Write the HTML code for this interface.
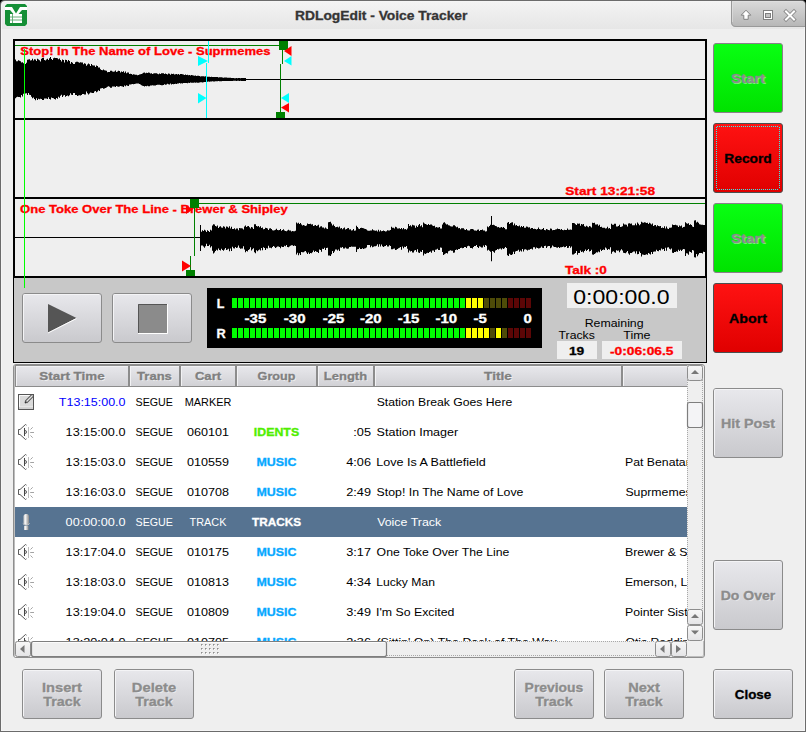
<!DOCTYPE html><html><head><meta charset="utf-8"><style>html,body{margin:0;padding:0;width:806px;height:732px;overflow:hidden;background:#efefef}svg{display:block}text{font-family:"Liberation Sans",sans-serif}</style></head><body>
<svg width="806" height="732" viewBox="0 0 806 732">
<defs>
<linearGradient id="gTitle" x1="0" y1="0" x2="0" y2="1"><stop offset="0" stop-color="#f3f3f3"/><stop offset="1" stop-color="#e6e6e6"/></linearGradient>
<linearGradient id="gTab" x1="0" y1="0" x2="0" y2="1"><stop offset="0" stop-color="#dadada"/><stop offset="1" stop-color="#b6b6b6"/></linearGradient>
<linearGradient id="gBtn" x1="0" y1="0" x2="0" y2="1"><stop offset="0" stop-color="#e8e8ec"/><stop offset="1" stop-color="#c9c9cd"/></linearGradient>
<linearGradient id="gHdr" x1="0" y1="0" x2="0" y2="1"><stop offset="0" stop-color="#e9e9ed"/><stop offset="1" stop-color="#d0d0d4"/></linearGradient>
<linearGradient id="gGreen" x1="0" y1="0" x2="0" y2="1"><stop offset="0" stop-color="#08ff12"/><stop offset="1" stop-color="#00e200"/></linearGradient>
<linearGradient id="gRed" x1="0" y1="0" x2="0" y2="1"><stop offset="0" stop-color="#ff1212"/><stop offset="1" stop-color="#e00000"/></linearGradient>
<linearGradient id="gMic" x1="0" y1="0" x2="1" y2="0"><stop offset="0" stop-color="#c8c8c8"/><stop offset="0.35" stop-color="#f4f4f4"/><stop offset="1" stop-color="#8a8a8a"/></linearGradient>
<linearGradient id="gSb" x1="0" y1="0" x2="0" y2="1"><stop offset="0" stop-color="#f7f7f7"/><stop offset="1" stop-color="#e4e4e6"/></linearGradient>
<clipPath id="clipTbl"><rect x="15" y="365" width="672" height="276"/></clipPath>
<clipPath id="clipBody"><rect x="15" y="387" width="672" height="254"/></clipPath>
</defs>
<rect x="0" y="0" width="806" height="732" fill="#000"/>
<path d="M0,732 L0,5 Q0,0 5,0 L801,0 Q806,0 806,5 L806,732 Z" fill="#6b6b6b"/>
<path d="M1,731 L1,5 Q1,1 5,1 L801,1 Q805,1 805,5 L805,731 Z" fill="#f5f5f5"/>
<rect x="2" y="2" width="802" height="27" fill="url(#gTitle)"/>
<rect x="2" y="29" width="802" height="701" fill="#efefef"/>
<path d="M731,1 L801,1 Q805,1 805,5 L805,27 L736,27 Q731,27 731,22 Z" fill="url(#gTab)"/>
<path d="M731.5,1 L731.5,22 Q731.5,26.5 736,26.5 L805,26.5" fill="none" stroke="#999" stroke-width="1"/>
<path d="M732.5,1.5 L732.5,22 M733,1.5 L801,1.5" fill="none" stroke="#e2e2e2" stroke-width="1" opacity="0.6"/>
<path d="M746,10.2 L750.8,15.2 L748.2,15.2 L748.2,19.3 L743.8,19.3 L743.8,15.2 L741.2,15.2 Z" fill="#fff" stroke="#808080" stroke-width="1" stroke-linejoin="round"/>
<rect x="763.5" y="10.5" width="9" height="9" fill="#fff" stroke="#808080" stroke-width="1"/>
<rect x="765.5" y="13.5" width="5" height="4" fill="#c2c2c2" stroke="#808080" stroke-width="1"/>
<path d="M786,11.5 L794,19.5 M794,11.5 L786,19.5" stroke="#8a8a8a" stroke-width="3.8" stroke-linecap="square"/>
<path d="M786,11.5 L794,19.5 M794,11.5 L786,19.5" stroke="#fff" stroke-width="2" stroke-linecap="square"/>
<path d="M7,4 L25,4 L27,6 L27,24 L25,26 L7,26 L5,24 L5,6 Z" fill="#158f36"/>
<path d="M5,7 L12,7 L16,13.5 L20,7 L27,7 L27,10 L22,10 L18.5,14 L13.5,14 L10,10 L5,10 Z" fill="#fff"/>
<rect x="10" y="14" width="12" height="9" fill="#fff"/>
<path d="M10,17 L22,17 M10,20 L22,20 M12.5,14 L12.5,23" stroke="#5aa86e" stroke-width="0.9"/>
<text x="295.09" y="20.00" font-size="12" font-weight="bold" stroke="#353535" stroke-width="0.3" fill="#353535" text-anchor="start" textLength="172.30" lengthAdjust="spacingAndGlyphs">RDLogEdit - Voice Tracker</text>
<rect x="13" y="39" width="694" height="240" fill="#000"/>
<rect x="15" y="41" width="690" height="77" fill="#efefef"/>
<rect x="15" y="120" width="690" height="77" fill="#efefef"/>
<rect x="15" y="199" width="690" height="77" fill="#efefef"/>
<path d="M15,59.6 L15,59.6 L16,59.6 L16,61.3 L17,61.3 L17,61.2 L18,61.2 L18,60.3 L19,60.3 L19,60.7 L20,60.7 L20,61.2 L21,61.2 L21,62.5 L22,62.5 L22,62.2 L23,62.2 L23,63.2 L24,63.2 L24,62.5 L25,62.5 L25,63.9 L26,63.9 L26,62.8 L27,62.8 L27,59.7 L28,59.7 L28,59.6 L29,59.6 L29,59.2 L30,59.2 L30,60.6 L31,60.6 L31,60.2 L32,60.2 L32,58.8 L33,58.8 L33,60.6 L34,60.6 L34,59.2 L35,59.2 L35,59.6 L36,59.6 L36,60.9 L37,60.9 L37,58.7 L38,58.7 L38,59.5 L39,59.5 L39,60.3 L40,60.3 L40,61.4 L41,61.4 L41,58.8 L42,58.8 L42,58.0 L43,58.0 L43,57.7 L44,57.7 L44,59.9 L45,59.9 L45,60.4 L46,60.4 L46,59.4 L47,59.4 L47,58.8 L48,58.8 L48,59.9 L49,59.9 L49,58.2 L50,58.2 L50,57.1 L51,57.1 L51,59.0 L52,59.0 L52,59.9 L53,59.9 L53,58.3 L54,58.3 L54,57.7 L55,57.7 L55,58.1 L56,58.1 L56,58.1 L57,58.1 L57,58.3 L58,58.3 L58,59.2 L59,59.2 L59,58.6 L60,58.6 L60,60.1 L61,60.1 L61,61.4 L62,61.4 L62,59.5 L63,59.5 L63,59.9 L64,59.9 L64,62.6 L65,62.6 L65,59.8 L66,59.8 L66,60.1 L67,60.1 L67,61.5 L68,61.5 L68,60.1 L69,60.1 L69,61.0 L70,61.0 L70,63.7 L71,63.7 L71,61.9 L72,61.9 L72,62.8 L73,62.8 L73,64.0 L74,64.0 L74,64.0 L75,64.0 L75,62.2 L76,62.2 L76,61.7 L77,61.7 L77,61.8 L78,61.8 L78,62.3 L79,62.3 L79,62.8 L80,62.8 L80,62.3 L81,62.3 L81,62.6 L82,62.6 L82,62.6 L83,62.6 L83,64.3 L84,64.3 L84,63.3 L85,63.3 L85,63.8 L86,63.8 L86,65.7 L87,65.7 L87,64.4 L88,64.4 L88,63.6 L89,63.6 L89,64.3 L90,64.3 L90,66.1 L91,66.1 L91,64.0 L92,64.0 L92,65.3 L93,65.3 L93,65.5 L94,65.5 L94,65.6 L95,65.6 L95,66.9 L96,66.9 L96,65.6 L97,65.6 L97,66.0 L98,66.0 L98,67.4 L99,67.4 L99,67.4 L100,67.4 L100,69.3 L101,69.3 L101,69.9 L102,69.9 L102,70.3 L103,70.3 L103,69.5 L104,69.5 L104,70.3 L105,70.3 L105,70.5 L106,70.5 L106,70.7 L107,70.7 L107,72.2 L108,72.2 L108,72.1 L109,72.1 L109,72.1 L110,72.1 L110,70.7 L111,70.7 L111,70.7 L112,70.7 L112,71.4 L113,71.4 L113,71.8 L114,71.8 L114,71.4 L115,71.4 L115,70.5 L116,70.5 L116,72.0 L117,72.0 L117,71.6 L118,71.6 L118,70.8 L119,70.8 L119,71.1 L120,71.1 L120,72.5 L121,72.5 L121,71.4 L122,71.4 L122,72.1 L123,72.1 L123,71.3 L124,71.3 L124,72.7 L125,72.7 L125,71.6 L126,71.6 L126,73.3 L127,73.3 L127,72.5 L128,72.5 L128,72.6 L129,72.6 L129,74.1 L130,74.1 L130,73.7 L131,73.7 L131,74.0 L132,74.0 L132,74.8 L133,74.8 L133,74.3 L134,74.3 L134,74.5 L135,74.5 L135,74.7 L136,74.7 L136,74.8 L137,74.8 L137,75.2 L138,75.2 L138,75.1 L139,75.1 L139,74.5 L140,74.5 L140,74.3 L141,74.3 L141,74.0 L142,74.0 L142,73.5 L143,73.5 L143,72.8 L144,72.8 L144,72.5 L145,72.5 L145,73.3 L146,73.3 L146,72.8 L147,72.8 L147,73.1 L148,73.1 L148,72.6 L149,72.6 L149,72.8 L150,72.8 L150,73.6 L151,73.6 L151,73.3 L152,73.3 L152,73.9 L153,73.9 L153,73.4 L154,73.4 L154,73.3 L155,73.3 L155,73.3 L156,73.3 L156,73.3 L157,73.3 L157,73.7 L158,73.7 L158,74.2 L159,74.2 L159,73.6 L160,73.6 L160,74.0 L161,74.0 L161,73.2 L162,73.2 L162,73.2 L163,73.2 L163,73.2 L164,73.2 L164,74.1 L165,74.1 L165,73.4 L166,73.4 L166,74.0 L167,74.0 L167,74.4 L168,74.4 L168,73.6 L169,73.6 L169,73.8 L170,73.8 L170,74.7 L171,74.7 L171,73.7 L172,73.7 L172,74.1 L173,74.1 L173,73.8 L174,73.8 L174,74.4 L175,74.4 L175,74.2 L176,74.2 L176,73.9 L177,73.9 L177,74.4 L178,74.4 L178,74.0 L179,74.0 L179,74.7 L180,74.7 L180,74.1 L181,74.1 L181,74.1 L182,74.1 L182,74.3 L183,74.3 L183,74.6 L184,74.6 L184,75.1 L185,75.1 L185,74.6 L186,74.6 L186,75.0 L187,75.0 L187,74.7 L188,74.7 L188,75.3 L189,75.3 L189,74.9 L190,74.9 L190,75.4 L191,75.4 L191,75.1 L192,75.1 L192,75.2 L193,75.2 L193,75.5 L194,75.5 L194,75.7 L195,75.7 L195,75.6 L196,75.6 L196,75.9 L197,75.9 L197,75.7 L198,75.7 L198,75.8 L199,75.8 L199,76.0 L200,76.0 L200,76.4 L201,76.4 L201,76.2 L202,76.2 L202,76.2 L203,76.2 L203,76.2 L204,76.2 L204,76.6 L205,76.6 L205,76.3 L206,76.3 L206,76.9 L207,76.9 L207,76.8 L208,76.8 L208,76.7 L209,76.7 L209,76.7 L210,76.7 L210,76.9 L211,76.9 L211,76.8 L212,76.8 L212,77.1 L213,77.1 L213,77.0 L214,77.0 L214,76.9 L215,76.9 L215,77.0 L216,77.0 L216,77.1 L217,77.1 L217,77.1 L218,77.1 L218,77.5 L219,77.5 L219,77.3 L220,77.3 L220,77.3 L221,77.3 L221,77.3 L222,77.3 L222,77.4 L223,77.4 L223,77.8 L224,77.8 L224,77.5 L225,77.5 L225,77.6 L226,77.6 L226,77.6 L227,77.6 L227,77.8 L228,77.8 L228,77.7 L229,77.7 L229,77.8 L230,77.8 L230,77.8 L231,77.8 L231,77.9 L232,77.9 L232,78.0 L233,78.0 L233,78.1 L234,78.1 L234,78.2 L235,78.2 L235,78.2 L236,78.2 L236,78.0 L237,78.0 L237,78.2 L238,78.2 L238,78.1 L239,78.1 L239,77.9 L240,77.9 L240,78.2 L241,78.2 L241,78.1 L242,78.1 L242,77.9 L243,77.9 L243,78.0 L244,78.0 L244,78.1 L245,78.1 L245,78.0 L246,78.0 L246,80.9 L245,80.9 L245,80.9 L244,80.9 L244,80.9 L243,80.9 L243,81.1 L242,81.1 L242,80.9 L241,80.9 L241,80.8 L240,80.8 L240,81.0 L239,81.0 L239,80.8 L238,80.8 L238,80.8 L237,80.8 L237,80.9 L236,80.9 L236,80.8 L235,80.8 L235,80.8 L234,80.8 L234,80.8 L233,80.8 L233,81.0 L232,81.0 L232,81.0 L231,81.0 L231,81.0 L230,81.0 L230,81.0 L229,81.0 L229,81.0 L228,81.0 L228,81.0 L227,81.0 L227,81.1 L226,81.1 L226,81.1 L225,81.1 L225,81.0 L224,81.0 L224,80.9 L223,80.9 L223,81.0 L222,81.0 L222,81.2 L221,81.2 L221,81.2 L220,81.2 L220,81.2 L219,81.2 L219,81.0 L218,81.0 L218,81.2 L217,81.2 L217,81.3 L216,81.3 L216,81.3 L215,81.3 L215,81.5 L214,81.5 L214,81.4 L213,81.4 L213,81.3 L212,81.3 L212,81.5 L211,81.5 L211,81.4 L210,81.4 L210,81.7 L209,81.7 L209,81.6 L208,81.6 L208,81.7 L207,81.7 L207,81.8 L206,81.8 L206,82.1 L205,82.1 L205,81.9 L204,81.9 L204,82.3 L203,82.3 L203,82.4 L202,82.4 L202,82.3 L201,82.3 L201,82.2 L200,82.2 L200,82.5 L199,82.5 L199,82.7 L198,82.7 L198,82.8 L197,82.8 L197,82.6 L196,82.6 L196,82.8 L195,82.8 L195,82.4 L194,82.4 L194,82.8 L193,82.8 L193,82.8 L192,82.8 L192,82.8 L191,82.8 L191,82.6 L190,82.6 L190,82.9 L189,82.9 L189,82.8 L188,82.8 L188,83.3 L187,83.3 L187,82.9 L186,82.9 L186,83.0 L185,83.0 L185,82.9 L184,82.9 L184,83.0 L183,83.0 L183,83.5 L182,83.5 L182,83.3 L181,83.3 L181,83.6 L180,83.6 L180,82.9 L179,82.9 L179,83.5 L178,83.5 L178,83.5 L177,83.5 L177,84.0 L176,84.0 L176,83.7 L175,83.7 L175,83.9 L174,83.9 L174,84.2 L173,84.2 L173,84.1 L172,84.1 L172,84.4 L171,84.4 L171,83.5 L170,83.5 L170,84.4 L169,84.4 L169,84.3 L168,84.3 L168,83.8 L167,83.8 L167,84.6 L166,84.6 L166,84.7 L165,84.7 L165,84.2 L164,84.2 L164,85.0 L163,85.0 L163,85.3 L162,85.3 L162,85.3 L161,85.3 L161,84.9 L160,84.9 L160,84.8 L159,84.8 L159,84.8 L158,84.8 L158,84.8 L157,84.8 L157,85.1 L156,85.1 L156,85.4 L155,85.4 L155,85.4 L154,85.4 L154,85.5 L153,85.5 L153,85.2 L152,85.2 L152,85.5 L151,85.5 L151,85.5 L150,85.5 L150,86.3 L149,86.3 L149,86.2 L148,86.2 L148,85.8 L147,85.8 L147,86.3 L146,86.3 L146,85.9 L145,85.9 L145,86.6 L144,86.6 L144,86.0 L143,86.0 L143,85.7 L142,85.7 L142,85.3 L141,85.3 L141,84.5 L140,84.5 L140,84.0 L139,84.0 L139,83.4 L138,83.4 L138,83.4 L137,83.4 L137,83.5 L136,83.5 L136,83.8 L135,83.8 L135,83.9 L134,83.9 L134,84.3 L133,84.3 L133,84.0 L132,84.0 L132,84.3 L131,84.3 L131,84.5 L130,84.5 L130,84.4 L129,84.4 L129,86.0 L128,86.0 L128,85.8 L127,85.8 L127,85.2 L126,85.2 L126,86.3 L125,86.3 L125,85.5 L124,85.5 L124,87.0 L123,87.0 L123,86.4 L122,86.4 L122,86.2 L121,86.2 L121,85.9 L120,85.9 L120,86.6 L119,86.6 L119,86.8 L118,86.8 L118,86.4 L117,86.4 L117,86.0 L116,86.0 L116,87.1 L115,87.1 L115,86.5 L114,86.5 L114,86.5 L113,86.5 L113,86.5 L112,86.5 L112,87.7 L111,87.7 L111,87.7 L110,87.7 L110,86.7 L109,86.7 L109,86.2 L108,86.2 L108,86.7 L107,86.7 L107,87.6 L106,87.6 L106,88.1 L105,88.1 L105,88.6 L104,88.6 L104,88.8 L103,88.8 L103,88.1 L102,88.1 L102,88.3 L101,88.3 L101,88.6 L100,88.6 L100,90.9 L99,90.9 L99,90.3 L98,90.3 L98,91.4 L97,91.4 L97,92.3 L96,92.3 L96,91.0 L95,91.0 L95,91.5 L94,91.5 L94,93.0 L93,93.0 L93,93.0 L92,93.0 L92,92.7 L91,92.7 L91,92.5 L90,92.5 L90,93.6 L89,93.6 L89,94.4 L88,94.4 L88,93.3 L87,93.3 L87,91.6 L86,91.6 L86,94.4 L85,94.4 L85,94.4 L84,94.4 L84,94.0 L83,94.0 L83,94.1 L82,94.1 L82,95.0 L81,95.0 L81,95.5 L80,95.5 L80,95.3 L79,95.3 L79,95.5 L78,95.5 L78,95.9 L77,95.9 L77,95.0 L76,95.0 L76,95.0 L75,95.0 L75,93.0 L74,93.0 L74,93.0 L73,93.0 L73,95.1 L72,95.1 L72,94.7 L71,94.7 L71,93.3 L70,93.3 L70,95.3 L69,95.3 L69,96.2 L68,96.2 L68,95.5 L67,95.5 L67,96.0 L66,96.0 L66,96.7 L65,96.7 L65,95.0 L64,95.0 L64,95.6 L63,95.6 L63,96.9 L62,96.9 L62,94.8 L61,94.8 L61,95.8 L60,95.8 L60,97.8 L59,97.8 L59,96.7 L58,96.7 L58,98.7 L57,98.7 L57,97.9 L56,97.9 L56,99.4 L55,99.4 L55,99.1 L54,99.1 L54,98.3 L53,98.3 L53,98.1 L52,98.1 L52,97.5 L51,97.5 L51,99.6 L50,99.6 L50,98.9 L49,98.9 L49,97.3 L48,97.3 L48,99.1 L47,99.1 L47,98.5 L46,98.5 L46,98.5 L45,98.5 L45,98.4 L44,98.4 L44,99.9 L43,99.9 L43,100.1 L42,100.1 L42,99.1 L41,99.1 L41,98.7 L40,98.7 L40,99.3 L39,99.3 L39,98.7 L38,98.7 L38,100.0 L37,100.0 L37,98.3 L36,98.3 L36,100.2 L35,100.2 L35,99.0 L34,99.0 L34,97.4 L33,97.4 L33,98.3 L32,98.3 L32,96.7 L31,96.7 L31,94.9 L30,94.9 L30,94.7 L29,94.7 L29,93.1 L28,93.1 L28,95.0 L27,95.0 L27,93.2 L26,93.2 L26,93.6 L25,93.6 L25,94.6 L24,94.6 L24,93.8 L23,93.8 L23,96.5 L22,96.5 L22,95.1 L21,95.1 L21,97.4 L20,97.4 L20,97.0 L19,97.0 L19,97.1 L18,97.1 L18,96.8 L17,96.8 L17,97.3 L16,97.3 L16,98.2 L15,98.2 Z" fill="#000"/>
<rect x="15" y="79" width="690" height="1" fill="#000"/>
<rect x="15" y="45" width="265" height="1" fill="#008000"/>
<path d="M200,225.0 L200,225.0 L201,225.0 L201,231.7 L202,231.7 L202,230.3 L203,230.3 L203,230.9 L204,230.9 L204,229.8 L205,229.8 L205,230.6 L206,230.6 L206,232.1 L207,232.1 L207,230.3 L208,230.3 L208,231.0 L209,231.0 L209,232.0 L210,232.0 L210,229.8 L211,229.8 L211,230.4 L212,230.4 L212,225.4 L213,225.4 L213,224.3 L214,224.3 L214,224.4 L215,224.4 L215,226.0 L216,226.0 L216,226.4 L217,226.4 L217,225.6 L218,225.6 L218,228.1 L219,228.1 L219,226.8 L220,226.8 L220,226.3 L221,226.3 L221,227.4 L222,227.4 L222,227.7 L223,227.7 L223,226.3 L224,226.3 L224,226.8 L225,226.8 L225,228.4 L226,228.4 L226,226.4 L227,226.4 L227,226.7 L228,226.7 L228,227.8 L229,227.8 L229,226.3 L230,226.3 L230,228.6 L231,228.6 L231,226.7 L232,226.7 L232,229.1 L233,229.1 L233,228.9 L234,228.9 L234,228.3 L235,228.3 L235,229.6 L236,229.6 L236,228.4 L237,228.4 L237,228.4 L238,228.4 L238,230.3 L239,230.3 L239,228.1 L240,228.1 L240,228.3 L241,228.3 L241,228.3 L242,228.3 L242,228.6 L243,228.6 L243,229.5 L244,229.5 L244,226.5 L245,226.5 L245,225.5 L246,225.5 L246,226.9 L247,226.9 L247,226.3 L248,226.3 L248,226.0 L249,226.0 L249,227.3 L250,227.3 L250,228.6 L251,228.6 L251,227.0 L252,227.0 L252,227.4 L253,227.4 L253,228.9 L254,228.9 L254,224.3 L255,224.3 L255,224.2 L256,224.2 L256,226.0 L257,226.0 L257,226.5 L258,226.5 L258,226.1 L259,226.1 L259,227.2 L260,227.2 L260,226.2 L261,226.2 L261,228.1 L262,228.1 L262,227.4 L263,227.4 L263,229.3 L264,229.3 L264,228.9 L265,228.9 L265,227.8 L266,227.8 L266,228.1 L267,228.1 L267,228.4 L268,228.4 L268,230.1 L269,230.1 L269,228.6 L270,228.6 L270,228.3 L271,228.3 L271,229.1 L272,229.1 L272,230.2 L273,230.2 L273,230.6 L274,230.6 L274,230.3 L275,230.3 L275,229.7 L276,229.7 L276,228.7 L277,228.7 L277,229.9 L278,229.9 L278,230.2 L279,230.2 L279,230.0 L280,230.0 L280,229.1 L281,229.1 L281,230.8 L282,230.8 L282,230.1 L283,230.1 L283,229.3 L284,229.3 L284,230.6 L285,230.6 L285,231.0 L286,231.0 L286,231.2 L287,231.2 L287,230.6 L288,230.6 L288,229.7 L289,229.7 L289,230.4 L290,230.4 L290,230.5 L291,230.5 L291,231.4 L292,231.4 L292,231.1 L293,231.1 L293,231.3 L294,231.3 L294,231.2 L295,231.2 L295,230.7 L296,230.7 L296,222.6 L297,222.6 L297,223.5 L298,223.5 L298,222.7 L299,222.7 L299,223.9 L300,223.9 L300,223.0 L301,223.0 L301,224.4 L302,224.4 L302,225.4 L303,225.4 L303,225.1 L304,225.1 L304,225.6 L305,225.6 L305,225.9 L306,225.9 L306,225.4 L307,225.4 L307,223.4 L308,223.4 L308,224.1 L309,224.1 L309,223.9 L310,223.9 L310,223.8 L311,223.8 L311,224.6 L312,224.6 L312,224.2 L313,224.2 L313,226.1 L314,226.1 L314,225.5 L315,225.5 L315,225.1 L316,225.1 L316,225.9 L317,225.9 L317,225.6 L318,225.6 L318,224.8 L319,224.8 L319,227.5 L320,227.5 L320,226.4 L321,226.4 L321,226.2 L322,226.2 L322,227.4 L323,227.4 L323,227.4 L324,227.4 L324,228.4 L325,228.4 L325,227.6 L326,227.6 L326,228.6 L327,228.6 L327,229.1 L328,229.1 L328,222.3 L329,222.3 L329,221.9 L330,221.9 L330,221.8 L331,221.8 L331,223.5 L332,223.5 L332,225.5 L333,225.5 L333,224.5 L334,224.5 L334,225.9 L335,225.9 L335,227.2 L336,227.2 L336,227.1 L337,227.1 L337,226.8 L338,226.8 L338,227.4 L339,227.4 L339,226.5 L340,226.5 L340,228.5 L341,228.5 L341,228.1 L342,228.1 L342,229.3 L343,229.3 L343,228.2 L344,228.2 L344,227.5 L345,227.5 L345,229.4 L346,229.4 L346,229.0 L347,229.0 L347,228.2 L348,228.2 L348,228.1 L349,228.1 L349,229.6 L350,229.6 L350,229.2 L351,229.2 L351,230.6 L352,230.6 L352,230.3 L353,230.3 L353,229.0 L354,229.0 L354,230.7 L355,230.7 L355,230.4 L356,230.4 L356,225.8 L357,225.8 L357,226.9 L358,226.9 L358,228.4 L359,228.4 L359,228.9 L360,228.9 L360,228.0 L361,228.0 L361,227.8 L362,227.8 L362,228.1 L363,228.1 L363,228.2 L364,228.2 L364,228.7 L365,228.7 L365,229.0 L366,229.0 L366,229.5 L367,229.5 L367,230.6 L368,230.6 L368,230.8 L369,230.8 L369,230.8 L370,230.8 L370,230.4 L371,230.4 L371,230.5 L372,230.5 L372,229.3 L373,229.3 L373,230.3 L374,230.3 L374,230.6 L375,230.6 L375,230.8 L376,230.8 L376,230.6 L377,230.6 L377,231.5 L378,231.5 L378,229.8 L379,229.8 L379,231.6 L380,231.6 L380,230.2 L381,230.2 L381,231.2 L382,231.2 L382,231.1 L383,231.1 L383,230.5 L384,230.5 L384,230.9 L385,230.9 L385,231.4 L386,231.4 L386,231.3 L387,231.3 L387,230.3 L388,230.3 L388,230.6 L389,230.6 L389,230.6 L390,230.6 L390,230.0 L391,230.0 L391,226.8 L392,226.8 L392,227.7 L393,227.7 L393,227.7 L394,227.7 L394,228.6 L395,228.6 L395,226.8 L396,226.8 L396,227.2 L397,227.2 L397,228.5 L398,228.5 L398,228.5 L399,228.5 L399,228.2 L400,228.2 L400,228.9 L401,228.9 L401,227.9 L402,227.9 L402,229.2 L403,229.2 L403,228.0 L404,228.0 L404,229.3 L405,229.3 L405,229.1 L406,229.1 L406,229.8 L407,229.8 L407,228.6 L408,228.6 L408,224.1 L409,224.1 L409,226.0 L410,226.0 L410,225.3 L411,225.3 L411,226.6 L412,226.6 L412,224.7 L413,224.7 L413,225.3 L414,225.3 L414,225.5 L415,225.5 L415,227.7 L416,227.7 L416,225.8 L417,225.8 L417,227.1 L418,227.1 L418,225.2 L419,225.2 L419,224.0 L420,224.0 L420,226.3 L421,226.3 L421,225.2 L422,225.2 L422,227.3 L423,227.3 L423,222.5 L424,222.5 L424,223.6 L425,223.6 L425,224.0 L426,224.0 L426,224.4 L427,224.4 L427,224.9 L428,224.9 L428,224.1 L429,224.1 L429,224.9 L430,224.9 L430,224.6 L431,224.6 L431,224.6 L432,224.6 L432,225.5 L433,225.5 L433,225.9 L434,225.9 L434,225.7 L435,225.7 L435,227.4 L436,227.4 L436,227.1 L437,227.1 L437,227.6 L438,227.6 L438,227.6 L439,227.6 L439,226.9 L440,226.9 L440,228.6 L441,228.6 L441,228.5 L442,228.5 L442,224.4 L443,224.4 L443,222.7 L444,222.7 L444,222.2 L445,222.2 L445,223.5 L446,223.5 L446,224.6 L447,224.6 L447,224.2 L448,224.2 L448,225.3 L449,225.3 L449,225.4 L450,225.4 L450,226.2 L451,226.2 L451,226.6 L452,226.6 L452,226.4 L453,226.4 L453,225.3 L454,225.3 L454,225.3 L455,225.3 L455,226.2 L456,226.2 L456,227.2 L457,227.2 L457,226.7 L458,226.7 L458,228.3 L459,228.3 L459,228.1 L460,228.1 L460,229.2 L461,229.2 L461,228.3 L462,228.3 L462,228.3 L463,228.3 L463,228.2 L464,228.2 L464,229.4 L465,229.4 L465,230.1 L466,230.1 L466,229.1 L467,229.1 L467,230.3 L468,230.3 L468,230.6 L469,230.6 L469,230.5 L470,230.5 L470,229.2 L471,229.2 L471,228.9 L472,228.9 L472,229.1 L473,229.1 L473,229.5 L474,229.5 L474,230.4 L475,230.4 L475,230.6 L476,230.6 L476,230.7 L477,230.7 L477,229.8 L478,229.8 L478,229.5 L479,229.5 L479,231.0 L480,231.0 L480,230.0 L481,230.0 L481,230.1 L482,230.1 L482,229.4 L483,229.4 L483,230.4 L484,230.4 L484,230.4 L485,230.4 L485,231.6 L486,231.6 L486,231.2 L487,231.2 L487,226.4 L488,226.4 L488,227.2 L489,227.2 L489,225.9 L490,225.9 L490,224.7 L491,224.7 L491,216.0 L492,216.0 L492,224.9 L493,224.9 L493,224.7 L494,224.7 L494,225.3 L495,225.3 L495,226.1 L496,226.1 L496,226.3 L497,226.3 L497,227.3 L498,227.3 L498,226.9 L499,226.9 L499,227.7 L500,227.7 L500,227.6 L501,227.6 L501,226.9 L502,226.9 L502,227.7 L503,227.7 L503,227.1 L504,227.1 L504,228.1 L505,228.1 L505,229.3 L506,229.3 L506,229.2 L507,229.2 L507,222.7 L508,222.7 L508,222.1 L509,222.1 L509,223.9 L510,223.9 L510,223.0 L511,223.0 L511,222.6 L512,222.6 L512,222.3 L513,222.3 L513,225.2 L514,225.2 L514,223.6 L515,223.6 L515,225.6 L516,225.6 L516,225.0 L517,225.0 L517,226.1 L518,226.1 L518,226.2 L519,226.2 L519,225.6 L520,225.6 L520,227.2 L521,227.2 L521,226.0 L522,226.0 L522,227.1 L523,227.1 L523,226.1 L524,226.1 L524,227.8 L525,227.8 L525,227.7 L526,227.7 L526,226.4 L527,226.4 L527,226.8 L528,226.8 L528,227.6 L529,227.6 L529,227.2 L530,227.2 L530,228.7 L531,228.7 L531,228.0 L532,228.0 L532,227.9 L533,227.9 L533,229.0 L534,229.0 L534,228.7 L535,228.7 L535,228.9 L536,228.9 L536,229.5 L537,229.5 L537,229.0 L538,229.0 L538,227.6 L539,227.6 L539,229.1 L540,229.1 L540,229.4 L541,229.4 L541,229.6 L542,229.6 L542,229.0 L543,229.0 L543,228.1 L544,228.1 L544,230.1 L545,230.1 L545,230.2 L546,230.2 L546,228.9 L547,228.9 L547,229.4 L548,229.4 L548,230.0 L549,230.0 L549,230.3 L550,230.3 L550,228.4 L551,228.4 L551,228.8 L552,228.8 L552,230.3 L553,230.3 L553,229.9 L554,229.9 L554,230.1 L555,230.1 L555,229.4 L556,229.4 L556,229.2 L557,229.2 L557,228.4 L558,228.4 L558,229.0 L559,229.0 L559,229.0 L560,229.0 L560,229.8 L561,229.8 L561,229.1 L562,229.1 L562,229.9 L563,229.9 L563,230.2 L564,230.2 L564,229.8 L565,229.8 L565,230.0 L566,230.0 L566,229.9 L567,229.9 L567,228.6 L568,228.6 L568,229.8 L569,229.8 L569,229.7 L570,229.7 L570,229.6 L571,229.6 L571,229.8 L572,229.8 L572,222.9 L573,222.9 L573,222.9 L574,222.9 L574,223.2 L575,223.2 L575,224.3 L576,224.3 L576,225.1 L577,225.1 L577,223.4 L578,223.4 L578,223.7 L579,223.7 L579,223.4 L580,223.4 L580,225.8 L581,225.8 L581,224.1 L582,224.1 L582,224.6 L583,224.6 L583,224.1 L584,224.1 L584,226.3 L585,226.3 L585,226.7 L586,226.7 L586,225.8 L587,225.8 L587,226.6 L588,226.6 L588,227.3 L589,227.3 L589,226.0 L590,226.0 L590,226.6 L591,226.6 L591,227.5 L592,227.5 L592,222.8 L593,222.8 L593,223.1 L594,223.1 L594,222.8 L595,222.8 L595,224.4 L596,224.4 L596,224.6 L597,224.6 L597,224.2 L598,224.2 L598,225.7 L599,225.7 L599,224.8 L600,224.8 L600,227.0 L601,227.0 L601,226.7 L602,226.7 L602,227.7 L603,227.7 L603,227.7 L604,227.7 L604,227.8 L605,227.8 L605,228.5 L606,228.5 L606,228.2 L607,228.2 L607,226.8 L608,226.8 L608,228.4 L609,228.4 L609,228.0 L610,228.0 L610,229.1 L611,229.1 L611,223.7 L612,223.7 L612,224.8 L613,224.8 L613,224.8 L614,224.8 L614,223.8 L615,223.8 L615,223.8 L616,223.8 L616,226.4 L617,226.4 L617,226.4 L618,226.4 L618,225.9 L619,225.9 L619,224.7 L620,224.7 L620,227.0 L621,227.0 L621,226.8 L622,226.8 L622,226.3 L623,226.3 L623,223.4 L624,223.4 L624,224.4 L625,224.4 L625,224.4 L626,224.4 L626,224.7 L627,224.7 L627,226.6 L628,226.6 L628,223.5 L629,223.5 L629,223.3 L630,223.3 L630,223.7 L631,223.7 L631,223.6 L632,223.6 L632,225.3 L633,225.3 L633,225.3 L634,225.3 L634,225.3 L635,225.3 L635,223.4 L636,223.4 L636,225.2 L637,225.2 L637,222.6 L638,222.6 L638,223.7 L639,223.7 L639,225.2 L640,225.2 L640,224.2 L641,224.2 L641,221.7 L642,221.7 L642,222.5 L643,222.5 L643,222.7 L644,222.7 L644,222.2 L645,222.2 L645,222.4 L646,222.4 L646,223.1 L647,223.1 L647,222.7 L648,222.7 L648,224.0 L649,224.0 L649,222.8 L650,222.8 L650,223.4 L651,223.4 L651,224.6 L652,224.6 L652,223.6 L653,223.6 L653,225.9 L654,225.9 L654,225.2 L655,225.2 L655,224.9 L656,224.9 L656,226.4 L657,226.4 L657,225.2 L658,225.2 L658,225.9 L659,225.9 L659,226.2 L660,226.2 L660,226.0 L661,226.0 L661,228.1 L662,228.1 L662,227.4 L663,227.4 L663,228.0 L664,228.0 L664,226.2 L665,226.2 L665,228.6 L666,228.6 L666,226.4 L667,226.4 L667,228.5 L668,228.5 L668,229.0 L669,229.0 L669,227.7 L670,227.7 L670,227.7 L671,227.7 L671,227.6 L672,227.6 L672,224.5 L673,224.5 L673,224.9 L674,224.9 L674,225.1 L675,225.1 L675,224.7 L676,224.7 L676,225.2 L677,225.2 L677,225.5 L678,225.5 L678,226.9 L679,226.9 L679,225.5 L680,225.5 L680,226.3 L681,226.3 L681,225.6 L682,225.6 L682,227.7 L683,227.7 L683,227.0 L684,227.0 L684,226.8 L685,226.8 L685,222.3 L686,222.3 L686,223.3 L687,223.3 L687,223.7 L688,223.7 L688,223.3 L689,223.3 L689,225.0 L690,225.0 L690,224.3 L691,224.3 L691,225.1 L692,225.1 L692,226.5 L693,226.5 L693,227.1 L694,227.1 L694,220.6 L695,220.6 L695,220.3 L696,220.3 L696,222.4 L697,222.4 L697,221.8 L698,221.8 L698,222.7 L699,222.7 L699,224.2 L700,224.2 L700,224.4 L701,224.4 L701,224.7 L702,224.7 L702,224.7 L703,224.7 L703,225.1 L704,225.1 L704,225.1 L705,225.1 L705,251.9 L704,251.9 L704,251.8 L703,251.8 L703,253.4 L702,253.4 L702,252.9 L701,252.9 L701,253.0 L700,253.0 L700,252.9 L699,252.9 L699,254.6 L698,254.6 L698,256.3 L697,256.3 L697,254.1 L696,254.1 L696,257.5 L695,257.5 L695,257.3 L694,257.3 L694,250.4 L693,250.4 L693,250.1 L692,250.1 L692,252.8 L691,252.8 L691,251.9 L690,251.9 L690,251.5 L689,251.5 L689,254.8 L688,254.8 L688,253.4 L687,253.4 L687,253.2 L686,253.2 L686,256.0 L685,256.0 L685,249.2 L684,249.2 L684,249.0 L683,249.0 L683,249.8 L682,249.8 L682,250.9 L681,250.9 L681,249.7 L680,249.7 L680,251.1 L679,251.1 L679,249.7 L678,249.7 L678,251.7 L677,251.7 L677,251.3 L676,251.3 L676,252.0 L675,252.0 L675,251.9 L674,251.9 L674,253.0 L673,253.0 L673,252.8 L672,252.8 L672,248.6 L671,248.6 L671,249.6 L670,249.6 L670,248.8 L669,248.8 L669,247.3 L668,247.3 L668,247.5 L667,247.5 L667,250.8 L666,250.8 L666,247.8 L665,247.8 L665,250.9 L664,250.9 L664,249.0 L663,249.0 L663,249.4 L662,249.4 L662,248.5 L661,248.5 L661,250.4 L660,250.4 L660,250.1 L659,250.1 L659,251.2 L658,251.2 L658,251.0 L657,251.0 L657,249.7 L656,249.7 L656,251.5 L655,251.5 L655,251.6 L654,251.6 L654,251.8 L653,251.8 L653,254.1 L652,254.1 L652,251.9 L651,251.9 L651,254.5 L650,254.5 L650,253.8 L649,253.8 L649,253.1 L648,253.1 L648,254.7 L647,254.7 L647,254.2 L646,254.2 L646,254.8 L645,254.8 L645,254.9 L644,254.9 L644,254.7 L643,254.7 L643,254.6 L642,254.6 L642,256.4 L641,256.4 L641,252.9 L640,252.9 L640,251.6 L639,251.6 L639,254.0 L638,254.0 L638,254.3 L637,254.3 L637,251.2 L636,251.2 L636,253.4 L635,253.4 L635,251.5 L634,251.5 L634,251.4 L633,251.4 L633,252.2 L632,252.2 L632,253.1 L631,253.1 L631,253.0 L630,253.0 L630,254.8 L629,254.8 L629,253.5 L628,253.5 L628,251.1 L627,251.1 L627,252.3 L626,252.3 L626,253.3 L625,253.3 L625,253.1 L624,253.1 L624,252.8 L623,252.8 L623,250.6 L622,250.6 L622,249.3 L621,249.3 L621,250.6 L620,250.6 L620,252.3 L619,252.3 L619,250.4 L618,250.4 L618,250.7 L617,250.7 L617,250.2 L616,250.2 L616,252.8 L615,252.8 L615,252.3 L614,252.3 L614,251.3 L613,251.3 L613,251.7 L612,251.7 L612,253.7 L611,253.7 L611,247.2 L610,247.2 L610,249.6 L609,249.6 L609,249.1 L608,249.1 L608,249.9 L607,249.9 L607,248.4 L606,248.4 L606,247.4 L605,247.4 L605,249.9 L604,249.9 L604,249.5 L603,249.5 L603,250.1 L602,250.1 L602,251.1 L601,251.1 L601,249.4 L600,249.4 L600,252.2 L599,252.2 L599,251.6 L598,251.6 L598,252.4 L597,252.4 L597,252.3 L596,252.3 L596,253.2 L595,253.2 L595,254.1 L594,254.1 L594,254.7 L593,254.7 L593,254.4 L592,254.4 L592,249.7 L591,249.7 L591,251.1 L590,251.1 L590,251.4 L589,251.4 L589,249.1 L588,249.1 L588,250.1 L587,250.1 L587,251.1 L586,251.1 L586,249.6 L585,249.6 L585,251.1 L584,251.1 L584,252.6 L583,252.6 L583,251.6 L582,251.6 L582,252.0 L581,252.0 L581,250.6 L580,250.6 L580,253.0 L579,253.0 L579,253.0 L578,253.0 L578,254.7 L577,254.7 L577,251.1 L576,251.1 L576,253.0 L575,253.0 L575,253.7 L574,253.7 L574,254.6 L573,254.6 L573,254.4 L572,254.4 L572,246.4 L571,246.4 L571,247.7 L570,247.7 L570,246.1 L569,246.1 L569,247.7 L568,247.7 L568,248.1 L567,248.1 L567,245.9 L566,245.9 L566,247.1 L565,247.1 L565,247.2 L564,247.2 L564,246.4 L563,246.4 L563,247.0 L562,247.0 L562,247.3 L561,247.3 L561,247.2 L560,247.2 L560,247.9 L559,247.9 L559,247.0 L558,247.0 L558,247.8 L557,247.8 L557,247.4 L556,247.4 L556,247.1 L555,247.1 L555,246.9 L554,246.9 L554,246.5 L553,246.5 L553,245.6 L552,245.6 L552,247.5 L551,247.5 L551,248.2 L550,248.2 L550,245.9 L549,245.9 L549,246.1 L548,246.1 L548,246.5 L547,246.5 L547,248.1 L546,248.1 L546,245.8 L545,245.8 L545,246.1 L544,246.1 L544,248.1 L543,248.1 L543,247.7 L542,247.7 L542,246.5 L541,246.5 L541,247.8 L540,247.8 L540,248.2 L539,248.2 L539,248.5 L538,248.5 L538,248.1 L537,248.1 L537,247.4 L536,247.4 L536,248.8 L535,248.8 L535,247.3 L534,247.3 L534,247.3 L533,247.3 L533,249.4 L532,249.4 L532,248.7 L531,248.7 L531,248.9 L530,248.9 L530,249.7 L529,249.7 L529,249.8 L528,249.8 L528,250.5 L527,250.5 L527,249.7 L526,249.7 L526,249.2 L525,249.2 L525,249.6 L524,249.6 L524,251.5 L523,251.5 L523,248.9 L522,248.9 L522,251.4 L521,251.4 L521,250.5 L520,250.5 L520,251.8 L519,251.8 L519,249.8 L518,249.8 L518,250.8 L517,250.8 L517,251.1 L516,251.1 L516,251.5 L515,251.5 L515,254.1 L514,254.1 L514,251.7 L513,251.7 L513,254.3 L512,254.3 L512,254.9 L511,254.9 L511,254.7 L510,254.7 L510,253.7 L509,253.7 L509,256.0 L508,256.0 L508,255.3 L507,255.3 L507,247.9 L506,247.9 L506,247.0 L505,247.0 L505,248.3 L504,248.3 L504,248.9 L503,248.9 L503,248.3 L502,248.3 L502,249.4 L501,249.4 L501,248.5 L500,248.5 L500,248.8 L499,248.8 L499,249.4 L498,249.4 L498,248.9 L497,248.9 L497,249.9 L496,249.9 L496,250.5 L495,250.5 L495,252.7 L494,252.7 L494,251.8 L493,251.8 L493,251.1 L492,251.1 L492,261.2 L491,261.2 L491,251.8 L490,251.8 L490,250.7 L489,250.7 L489,249.8 L488,249.8 L488,250.5 L487,250.5 L487,245.8 L486,245.8 L486,245.0 L485,245.0 L485,247.0 L484,247.0 L484,245.5 L483,245.5 L483,247.6 L482,247.6 L482,247.4 L481,247.4 L481,246.7 L480,246.7 L480,246.3 L479,246.3 L479,248.0 L478,248.0 L478,247.1 L477,247.1 L477,245.0 L476,245.0 L476,246.1 L475,246.1 L475,246.1 L474,246.1 L474,247.1 L473,247.1 L473,248.4 L472,248.4 L472,248.0 L471,248.0 L471,247.9 L470,247.9 L470,246.3 L469,246.3 L469,245.8 L468,245.8 L468,246.2 L467,246.2 L467,247.9 L466,247.9 L466,247.0 L465,247.0 L465,247.1 L464,247.1 L464,248.0 L463,248.0 L463,248.2 L462,248.2 L462,247.7 L461,247.7 L461,248.0 L460,248.0 L460,248.9 L459,248.9 L459,249.0 L458,249.0 L458,250.0 L457,250.0 L457,249.5 L456,249.5 L456,250.1 L455,250.1 L455,252.6 L454,252.6 L454,252.7 L453,252.7 L453,250.7 L452,250.7 L452,250.8 L451,250.8 L451,250.3 L450,250.3 L450,250.8 L449,250.8 L449,251.3 L448,251.3 L448,253.5 L447,253.5 L447,253.0 L446,253.0 L446,253.4 L445,253.4 L445,254.3 L444,254.3 L444,255.0 L443,255.0 L443,251.9 L442,251.9 L442,247.7 L441,247.7 L441,247.4 L440,247.4 L440,249.9 L439,249.9 L439,250.1 L438,250.1 L438,248.7 L437,248.7 L437,249.5 L436,249.5 L436,249.7 L435,249.7 L435,252.0 L434,252.0 L434,250.6 L433,250.6 L433,250.6 L432,250.6 L432,252.8 L431,252.8 L431,251.6 L430,251.6 L430,251.9 L429,251.9 L429,253.0 L428,253.0 L428,252.8 L427,252.8 L427,253.3 L426,253.3 L426,254.0 L425,254.0 L425,253.6 L424,253.6 L424,255.4 L423,255.4 L423,250.1 L422,250.1 L422,252.1 L421,252.1 L421,251.4 L420,251.4 L420,253.0 L419,253.0 L419,252.4 L418,252.4 L418,249.2 L417,249.2 L417,251.8 L416,251.8 L416,250.1 L415,250.1 L415,250.6 L414,250.6 L414,252.6 L413,252.6 L413,252.4 L412,252.4 L412,250.9 L411,250.9 L411,251.6 L410,251.6 L410,250.4 L409,250.4 L409,252.6 L408,252.6 L408,248.7 L407,248.7 L407,246.1 L406,246.1 L406,247.1 L405,247.1 L405,246.7 L404,246.7 L404,248.3 L403,248.3 L403,246.5 L402,246.5 L402,249.8 L401,249.8 L401,246.9 L400,246.9 L400,247.7 L399,247.7 L399,248.3 L398,248.3 L398,248.9 L397,248.9 L397,249.7 L396,249.7 L396,249.9 L395,249.9 L395,248.5 L394,248.5 L394,248.7 L393,248.7 L393,249.2 L392,249.2 L392,249.2 L391,249.2 L391,246.0 L390,246.0 L390,245.3 L389,245.3 L389,246.6 L388,246.6 L388,246.4 L387,246.4 L387,244.9 L386,244.9 L386,246.1 L385,246.1 L385,246.3 L384,246.3 L384,246.9 L383,246.9 L383,246.3 L382,246.3 L382,244.6 L381,244.6 L381,246.4 L380,246.4 L380,244.3 L379,244.3 L379,246.8 L378,246.8 L378,244.2 L377,244.2 L377,245.7 L376,245.7 L376,246.3 L375,246.3 L375,246.3 L374,246.3 L374,246.8 L373,246.8 L373,247.3 L372,247.3 L372,245.7 L371,245.7 L371,247.2 L370,247.2 L370,245.0 L369,245.0 L369,244.9 L368,244.9 L368,245.1 L367,245.1 L367,247.5 L366,247.5 L366,248.3 L365,248.3 L365,248.4 L364,248.4 L364,248.9 L363,248.9 L363,248.2 L362,248.2 L362,249.1 L361,249.1 L361,249.1 L360,249.1 L360,247.7 L359,247.7 L359,249.1 L358,249.1 L358,249.2 L357,249.2 L357,252.0 L356,252.0 L356,246.7 L355,246.7 L355,246.7 L354,246.7 L354,246.8 L353,246.8 L353,246.8 L352,246.8 L352,246.5 L351,246.5 L351,247.1 L350,247.1 L350,247.1 L349,247.1 L349,248.5 L348,248.5 L348,248.7 L347,248.7 L347,248.6 L346,248.6 L346,247.5 L345,247.5 L345,248.5 L344,248.5 L344,248.6 L343,248.6 L343,246.9 L342,246.9 L342,247.8 L341,247.8 L341,247.5 L340,247.5 L340,250.9 L339,250.9 L339,249.5 L338,249.5 L338,250.4 L337,250.4 L337,249.4 L336,249.4 L336,249.4 L335,249.4 L335,251.6 L334,251.6 L334,253.1 L333,253.1 L333,251.1 L332,251.1 L332,254.2 L331,254.2 L331,256.1 L330,256.1 L330,255.5 L329,255.5 L329,255.4 L328,255.4 L328,247.7 L327,247.7 L327,247.9 L326,247.9 L326,250.0 L325,250.0 L325,247.8 L324,247.8 L324,249.1 L323,249.1 L323,248.8 L322,248.8 L322,251.8 L321,251.8 L321,249.9 L320,249.9 L320,249.5 L319,249.5 L319,252.9 L318,252.9 L318,251.9 L317,251.9 L317,251.7 L316,251.7 L316,250.9 L315,250.9 L315,251.9 L314,251.9 L314,250.6 L313,250.6 L313,252.2 L312,252.2 L312,253.3 L311,253.3 L311,253.0 L310,253.0 L310,254.0 L309,254.0 L309,252.5 L308,252.5 L308,254.0 L307,254.0 L307,252.4 L306,252.4 L306,251.1 L305,251.1 L305,251.4 L304,251.4 L304,252.3 L303,252.3 L303,252.2 L302,252.2 L302,252.1 L301,252.1 L301,255.1 L300,255.1 L300,253.2 L299,253.2 L299,255.3 L298,255.3 L298,252.8 L297,252.8 L297,254.4 L296,254.4 L296,246.1 L295,246.1 L295,245.4 L294,245.4 L294,245.9 L293,245.9 L293,245.2 L292,245.2 L292,245.2 L291,245.2 L291,245.7 L290,245.7 L290,246.6 L289,246.6 L289,247.3 L288,247.3 L288,247.0 L287,247.0 L287,245.0 L286,245.0 L286,246.3 L285,246.3 L285,245.8 L284,245.8 L284,247.1 L283,247.1 L283,247.1 L282,247.1 L282,246.6 L281,246.6 L281,248.2 L280,248.2 L280,246.9 L279,246.9 L279,246.6 L278,246.6 L278,246.6 L277,246.6 L277,247.2 L276,247.2 L276,248.0 L275,248.0 L275,246.8 L274,246.8 L274,245.9 L273,245.9 L273,247.1 L272,247.1 L272,248.2 L271,248.2 L271,247.7 L270,247.7 L270,247.7 L269,247.7 L269,245.8 L268,245.8 L268,248.5 L267,248.5 L267,248.2 L266,248.2 L266,250.0 L265,250.0 L265,247.9 L264,247.9 L264,247.3 L263,247.3 L263,250.3 L262,250.3 L262,247.9 L261,247.9 L261,250.5 L260,250.5 L260,249.5 L259,249.5 L259,250.3 L258,250.3 L258,251.2 L257,251.2 L257,250.2 L256,250.2 L256,253.3 L255,253.3 L255,252.2 L254,252.2 L254,248.3 L253,248.3 L253,249.3 L252,249.3 L252,250.4 L251,250.4 L251,247.3 L250,247.3 L250,249.3 L249,249.3 L249,250.0 L248,250.0 L248,251.5 L247,251.5 L247,250.9 L246,250.9 L246,252.3 L245,252.3 L245,249.6 L244,249.6 L244,246.3 L243,246.3 L243,248.6 L242,248.6 L242,248.6 L241,248.6 L241,248.8 L240,248.8 L240,247.8 L239,247.8 L239,245.6 L238,245.6 L238,247.5 L237,247.5 L237,247.9 L236,247.9 L236,247.1 L235,247.1 L235,248.5 L234,248.5 L234,248.2 L233,248.2 L233,246.8 L232,246.8 L232,251.0 L231,251.0 L231,248.4 L230,248.4 L230,251.3 L229,251.3 L229,248.8 L228,248.8 L228,249.5 L227,249.5 L227,250.0 L226,250.0 L226,247.9 L225,247.9 L225,249.5 L224,249.5 L224,250.8 L223,250.8 L223,249.9 L222,249.9 L222,248.8 L221,248.8 L221,250.5 L220,250.5 L220,250.0 L219,250.0 L219,248.6 L218,248.6 L218,250.6 L217,250.6 L217,249.7 L216,249.7 L216,251.1 L215,251.1 L215,252.6 L214,252.6 L214,253.5 L213,253.5 L213,250.8 L212,250.8 L212,246.3 L211,246.3 L211,247.5 L210,247.5 L210,244.8 L209,244.8 L209,245.9 L208,245.9 L208,245.9 L207,245.9 L207,243.8 L206,243.8 L206,246.2 L205,246.2 L205,247.7 L204,247.7 L204,246.4 L203,246.4 L203,245.5 L202,245.5 L202,245.4 L201,245.4 L201,251.0 L200,251.0 Z" fill="#000"/>
<rect x="15" y="237" width="186" height="1" fill="#000"/>
<rect x="199" y="203" width="506" height="1" fill="#008000"/>
<text x="20.22" y="55.00" font-size="11" font-weight="bold" stroke="#ff0000" stroke-width="0.3" fill="#ff0000" text-anchor="start" textLength="250.26" lengthAdjust="spacingAndGlyphs">Stop! In The Name of Love - Suprmemes</text>
<text x="20.07" y="213.30" font-size="11" font-weight="bold" stroke="#ff0000" stroke-width="0.3" fill="#ff0000" text-anchor="start" textLength="267.66" lengthAdjust="spacingAndGlyphs">One Toke Over The Line - Brewer &amp; Shipley</text>
<text x="565.21" y="195.00" font-size="11" font-weight="bold" stroke="#ff0000" stroke-width="0.3" fill="#ff0000" text-anchor="start" textLength="89.84" lengthAdjust="spacingAndGlyphs">Start 13:21:58</text>
<text x="564.95" y="274.00" font-size="11" font-weight="bold" stroke="#ff0000" stroke-width="0.3" fill="#ff0000" text-anchor="start" textLength="41.89" lengthAdjust="spacingAndGlyphs">Talk :0</text>
<rect x="208" y="41" width="1" height="22" fill="#00ffff"/>
<rect x="206" y="63" width="1" height="55" fill="#00ffff"/>
<path d="M198,56 L208,61 L198,66 Z" fill="#00ffff"/>
<path d="M198,93 L206.5,98 L198,103.5 Z" fill="#00ffff"/>
<rect x="279" y="41" width="9" height="9" fill="#008000"/>
<rect x="282" y="50" width="1" height="14" fill="#008000"/>
<rect x="280" y="64" width="1" height="48" fill="#008000"/>
<path d="M291.5,46 L284,51 L291.5,56 Z" fill="#ff0000"/>
<path d="M291.5,56 L284,61 L291.5,65.5 Z" fill="#00ffff"/>
<path d="M289,93 L281,98 L289,103 Z" fill="#00ffff"/>
<path d="M289,103 L281,107.5 L289,112.5 Z" fill="#ff0000"/>
<rect x="276" y="112" width="9" height="6" fill="#008000"/>
<rect x="190" y="199" width="9" height="9" fill="#008000"/>
<rect x="194" y="208" width="1" height="48" fill="#008000"/>
<rect x="190" y="256" width="1" height="14" fill="#008000"/>
<path d="M186,205 L193,209.5 L186,214 Z" fill="#ff0000"/>
<path d="M182,260.5 L191,266 L182,271.5 Z" fill="#ff0000"/>
<rect x="186" y="270" width="9" height="6" fill="#008000"/>
<rect x="13" y="278" width="694" height="85" fill="#000"/>
<rect x="14" y="278" width="692" height="84" fill="#c8c8c8"/>
<rect x="24" y="49" width="1" height="239" fill="#00ff00"/>
<rect x="22.5" y="293.5" width="79" height="49" rx="2.5" ry="2.5" fill="url(#gBtn)" stroke="#8b8b8b" stroke-width="1"/>
<path d="M23.5,340 L23.5,295.5 Q23.5,294.5 24.5,294.5 L99,294.5" fill="none" stroke="#f4f4f6" stroke-width="1"/>
<path d="M48,304 L76.5,318 L48,332.5 Z" fill="#555"/>
<path d="M76.5,318.5 L48,333" stroke="#fff" stroke-width="1"/>
<rect x="112.5" y="293.5" width="79" height="49" rx="2.5" ry="2.5" fill="url(#gBtn)" stroke="#8b8b8b" stroke-width="1"/>
<path d="M113.5,340 L113.5,295.5 Q113.5,294.5 114.5,294.5 L189,294.5" fill="none" stroke="#f4f4f6" stroke-width="1"/>
<rect x="138" y="304" width="29" height="29" fill="#8b8b8b"/>
<path d="M138.5,333 L138.5,304.5 L167,304.5" fill="none" stroke="#555" stroke-width="1"/>
<path d="M138,333.5 L167.5,333.5 L167.5,304" fill="none" stroke="#fff" stroke-width="1"/>
<rect x="207" y="288" width="335" height="60" fill="#000"/>
<text x="216.66" y="308.00" font-size="12" font-weight="bold" stroke="#fff" stroke-width="0.3" fill="#fff" text-anchor="start" textLength="7.65" lengthAdjust="spacingAndGlyphs">L</text>
<text x="216.64" y="338.00" font-size="12" font-weight="bold" stroke="#fff" stroke-width="0.3" fill="#fff" text-anchor="start" textLength="9.24" lengthAdjust="spacingAndGlyphs">R</text>
<rect x="232" y="298" width="5" height="10" fill="#00ff00"/>
<rect x="238" y="298" width="5" height="10" fill="#00ff00"/>
<rect x="244" y="298" width="5" height="10" fill="#00ff00"/>
<rect x="250" y="298" width="5" height="10" fill="#00ff00"/>
<rect x="256" y="298" width="5" height="10" fill="#00ff00"/>
<rect x="262" y="298" width="5" height="10" fill="#00ff00"/>
<rect x="268" y="298" width="5" height="10" fill="#00ff00"/>
<rect x="274" y="298" width="5" height="10" fill="#00ff00"/>
<rect x="280" y="298" width="5" height="10" fill="#00ff00"/>
<rect x="286" y="298" width="5" height="10" fill="#00ff00"/>
<rect x="292" y="298" width="5" height="10" fill="#00ff00"/>
<rect x="298" y="298" width="5" height="10" fill="#00ff00"/>
<rect x="304" y="298" width="5" height="10" fill="#00ff00"/>
<rect x="310" y="298" width="5" height="10" fill="#00ff00"/>
<rect x="316" y="298" width="5" height="10" fill="#00ff00"/>
<rect x="322" y="298" width="5" height="10" fill="#00ff00"/>
<rect x="328" y="298" width="5" height="10" fill="#00ff00"/>
<rect x="334" y="298" width="5" height="10" fill="#00ff00"/>
<rect x="340" y="298" width="5" height="10" fill="#00ff00"/>
<rect x="346" y="298" width="5" height="10" fill="#00ff00"/>
<rect x="352" y="298" width="5" height="10" fill="#00ff00"/>
<rect x="358" y="298" width="5" height="10" fill="#00ff00"/>
<rect x="364" y="298" width="5" height="10" fill="#00ff00"/>
<rect x="370" y="298" width="5" height="10" fill="#00ff00"/>
<rect x="376" y="298" width="5" height="10" fill="#00ff00"/>
<rect x="382" y="298" width="5" height="10" fill="#00ff00"/>
<rect x="388" y="298" width="5" height="10" fill="#00ff00"/>
<rect x="394" y="298" width="5" height="10" fill="#00ff00"/>
<rect x="400" y="298" width="5" height="10" fill="#00ff00"/>
<rect x="406" y="298" width="5" height="10" fill="#00ff00"/>
<rect x="412" y="298" width="5" height="10" fill="#00ff00"/>
<rect x="418" y="298" width="5" height="10" fill="#00ff00"/>
<rect x="424" y="298" width="5" height="10" fill="#00ff00"/>
<rect x="430" y="298" width="5" height="10" fill="#00ff00"/>
<rect x="436" y="298" width="5" height="10" fill="#00ff00"/>
<rect x="442" y="298" width="5" height="10" fill="#00ff00"/>
<rect x="448" y="298" width="5" height="10" fill="#00ff00"/>
<rect x="454" y="298" width="5" height="10" fill="#00ff00"/>
<rect x="460" y="298" width="5" height="10" fill="#00ff00"/>
<rect x="466" y="298" width="5" height="10" fill="#ffff00"/>
<rect x="472" y="298" width="5" height="10" fill="#ffff00"/>
<rect x="478" y="298" width="5" height="10" fill="#ffff00"/>
<rect x="484" y="298" width="5" height="10" fill="#4e4b08"/>
<rect x="490" y="298" width="5" height="10" fill="#4e4b08"/>
<rect x="496" y="298" width="5" height="10" fill="#4e4b08"/>
<rect x="502" y="298" width="5" height="10" fill="#4e4b08"/>
<rect x="508" y="298" width="5" height="10" fill="#5c0606"/>
<rect x="514" y="298" width="5" height="10" fill="#5c0606"/>
<rect x="520" y="298" width="5" height="10" fill="#5c0606"/>
<rect x="526" y="298" width="5" height="10" fill="#5c0606"/>
<rect x="232" y="328" width="5" height="10" fill="#00ff00"/>
<rect x="238" y="328" width="5" height="10" fill="#00ff00"/>
<rect x="244" y="328" width="5" height="10" fill="#00ff00"/>
<rect x="250" y="328" width="5" height="10" fill="#00ff00"/>
<rect x="256" y="328" width="5" height="10" fill="#00ff00"/>
<rect x="262" y="328" width="5" height="10" fill="#00ff00"/>
<rect x="268" y="328" width="5" height="10" fill="#00ff00"/>
<rect x="274" y="328" width="5" height="10" fill="#00ff00"/>
<rect x="280" y="328" width="5" height="10" fill="#00ff00"/>
<rect x="286" y="328" width="5" height="10" fill="#00ff00"/>
<rect x="292" y="328" width="5" height="10" fill="#00ff00"/>
<rect x="298" y="328" width="5" height="10" fill="#00ff00"/>
<rect x="304" y="328" width="5" height="10" fill="#00ff00"/>
<rect x="310" y="328" width="5" height="10" fill="#00ff00"/>
<rect x="316" y="328" width="5" height="10" fill="#00ff00"/>
<rect x="322" y="328" width="5" height="10" fill="#00ff00"/>
<rect x="328" y="328" width="5" height="10" fill="#00ff00"/>
<rect x="334" y="328" width="5" height="10" fill="#00ff00"/>
<rect x="340" y="328" width="5" height="10" fill="#00ff00"/>
<rect x="346" y="328" width="5" height="10" fill="#00ff00"/>
<rect x="352" y="328" width="5" height="10" fill="#00ff00"/>
<rect x="358" y="328" width="5" height="10" fill="#00ff00"/>
<rect x="364" y="328" width="5" height="10" fill="#00ff00"/>
<rect x="370" y="328" width="5" height="10" fill="#00ff00"/>
<rect x="376" y="328" width="5" height="10" fill="#00ff00"/>
<rect x="382" y="328" width="5" height="10" fill="#00ff00"/>
<rect x="388" y="328" width="5" height="10" fill="#00ff00"/>
<rect x="394" y="328" width="5" height="10" fill="#00ff00"/>
<rect x="400" y="328" width="5" height="10" fill="#00ff00"/>
<rect x="406" y="328" width="5" height="10" fill="#00ff00"/>
<rect x="412" y="328" width="5" height="10" fill="#00ff00"/>
<rect x="418" y="328" width="5" height="10" fill="#00ff00"/>
<rect x="424" y="328" width="5" height="10" fill="#00ff00"/>
<rect x="430" y="328" width="5" height="10" fill="#00ff00"/>
<rect x="436" y="328" width="5" height="10" fill="#00ff00"/>
<rect x="442" y="328" width="5" height="10" fill="#00ff00"/>
<rect x="448" y="328" width="5" height="10" fill="#00ff00"/>
<rect x="454" y="328" width="5" height="10" fill="#00ff00"/>
<rect x="460" y="328" width="5" height="10" fill="#00ff00"/>
<rect x="466" y="328" width="5" height="10" fill="#ffff00"/>
<rect x="472" y="328" width="5" height="10" fill="#ffff00"/>
<rect x="478" y="328" width="5" height="10" fill="#ffff00"/>
<rect x="484" y="328" width="5" height="10" fill="#ffff00"/>
<rect x="490" y="328" width="5" height="10" fill="#4e4b08"/>
<rect x="496" y="328" width="5" height="10" fill="#ffff00"/>
<rect x="502" y="328" width="5" height="10" fill="#4e4b08"/>
<rect x="508" y="328" width="5" height="10" fill="#5c0606"/>
<rect x="514" y="328" width="5" height="10" fill="#5c0606"/>
<rect x="520" y="328" width="5" height="10" fill="#5c0606"/>
<rect x="526" y="328" width="5" height="10" fill="#5c0606"/>
<text x="244.61" y="323.00" font-size="12" font-weight="bold" stroke="#fff" stroke-width="0.3" fill="#fff" text-anchor="start" textLength="21.68" lengthAdjust="spacingAndGlyphs">-35</text>
<text x="283.81" y="323.00" font-size="12" font-weight="bold" stroke="#fff" stroke-width="0.3" fill="#fff" text-anchor="start" textLength="21.68" lengthAdjust="spacingAndGlyphs">-30</text>
<text x="322.71" y="323.00" font-size="12" font-weight="bold" stroke="#fff" stroke-width="0.3" fill="#fff" text-anchor="start" textLength="21.68" lengthAdjust="spacingAndGlyphs">-25</text>
<text x="359.91" y="323.00" font-size="12" font-weight="bold" stroke="#fff" stroke-width="0.3" fill="#fff" text-anchor="start" textLength="21.68" lengthAdjust="spacingAndGlyphs">-20</text>
<text x="397.71" y="323.00" font-size="12" font-weight="bold" stroke="#fff" stroke-width="0.3" fill="#fff" text-anchor="start" textLength="21.68" lengthAdjust="spacingAndGlyphs">-15</text>
<text x="435.41" y="323.00" font-size="12" font-weight="bold" stroke="#fff" stroke-width="0.3" fill="#fff" text-anchor="start" textLength="21.68" lengthAdjust="spacingAndGlyphs">-10</text>
<text x="473.41" y="323.00" font-size="12" font-weight="bold" stroke="#fff" stroke-width="0.3" fill="#fff" text-anchor="start" textLength="13.33" lengthAdjust="spacingAndGlyphs">-5</text>
<text x="523.41" y="323.00" font-size="12" font-weight="bold" stroke="#fff" stroke-width="0.3" fill="#fff" text-anchor="start" textLength="8.35" lengthAdjust="spacingAndGlyphs">0</text>
<rect x="567" y="283" width="110" height="25" fill="#efefef"/>
<text x="573.30" y="303.50" font-size="20" fill="#000" text-anchor="start" textLength="96.18" lengthAdjust="spacingAndGlyphs">0:00:00.0</text>
<text x="584.69" y="327.30" font-size="11" fill="#000" text-anchor="start" textLength="58.90" lengthAdjust="spacingAndGlyphs">Remaining</text>
<text x="558.63" y="338.60" font-size="11" fill="#000" text-anchor="start" textLength="36.13" lengthAdjust="spacingAndGlyphs">Tracks</text>
<text x="623.32" y="338.60" font-size="11" fill="#000" text-anchor="start" textLength="27.26" lengthAdjust="spacingAndGlyphs">Time</text>
<rect x="557" y="341" width="40" height="18" fill="#efefef"/>
<rect x="602" y="341" width="80" height="18" fill="#efefef"/>
<text x="568.93" y="354.50" font-size="11" font-weight="bold" stroke="#000" stroke-width="0.3" fill="#000" text-anchor="start" textLength="15.31" lengthAdjust="spacingAndGlyphs">19</text>
<text x="609.96" y="354.50" font-size="11" font-weight="bold" stroke="#ff0000" stroke-width="0.3" fill="#ff0000" text-anchor="start" textLength="63.46" lengthAdjust="spacingAndGlyphs">-0:06:06.5</text>
<rect x="713.5" y="43.5" width="69" height="69" rx="2.5" ry="2.5" fill="url(#gGreen)" stroke="#8a7f8a" stroke-width="1"/>
<text x="749.00" y="84.30" font-size="12" font-weight="bold" stroke="#ffffff" stroke-width="0" fill="#ffffff" text-anchor="middle" textLength="34.13" lengthAdjust="spacingAndGlyphs" opacity="0.45">Start</text>
<text x="748.00" y="83.30" font-size="12" font-weight="bold" stroke="#8c8c8c" stroke-width="0.3" fill="#8c8c8c" text-anchor="middle" textLength="34.13" lengthAdjust="spacingAndGlyphs">Start</text>
<rect x="713.5" y="123.5" width="69" height="69" rx="2.5" ry="2.5" fill="url(#gRed)" stroke="#4a4f4f" stroke-width="1"/>
<rect x="717" y="126" width="1" height="1" fill="#33eeee"/>
<rect x="717" y="189" width="1" height="1" fill="#33eeee"/>
<rect x="719" y="126" width="1" height="1" fill="#33eeee"/>
<rect x="719" y="189" width="1" height="1" fill="#33eeee"/>
<rect x="721" y="126" width="1" height="1" fill="#33eeee"/>
<rect x="721" y="189" width="1" height="1" fill="#33eeee"/>
<rect x="723" y="126" width="1" height="1" fill="#33eeee"/>
<rect x="723" y="189" width="1" height="1" fill="#33eeee"/>
<rect x="725" y="126" width="1" height="1" fill="#33eeee"/>
<rect x="725" y="189" width="1" height="1" fill="#33eeee"/>
<rect x="727" y="126" width="1" height="1" fill="#33eeee"/>
<rect x="727" y="189" width="1" height="1" fill="#33eeee"/>
<rect x="729" y="126" width="1" height="1" fill="#33eeee"/>
<rect x="729" y="189" width="1" height="1" fill="#33eeee"/>
<rect x="731" y="126" width="1" height="1" fill="#33eeee"/>
<rect x="731" y="189" width="1" height="1" fill="#33eeee"/>
<rect x="733" y="126" width="1" height="1" fill="#33eeee"/>
<rect x="733" y="189" width="1" height="1" fill="#33eeee"/>
<rect x="735" y="126" width="1" height="1" fill="#33eeee"/>
<rect x="735" y="189" width="1" height="1" fill="#33eeee"/>
<rect x="737" y="126" width="1" height="1" fill="#33eeee"/>
<rect x="737" y="189" width="1" height="1" fill="#33eeee"/>
<rect x="739" y="126" width="1" height="1" fill="#33eeee"/>
<rect x="739" y="189" width="1" height="1" fill="#33eeee"/>
<rect x="741" y="126" width="1" height="1" fill="#33eeee"/>
<rect x="741" y="189" width="1" height="1" fill="#33eeee"/>
<rect x="743" y="126" width="1" height="1" fill="#33eeee"/>
<rect x="743" y="189" width="1" height="1" fill="#33eeee"/>
<rect x="745" y="126" width="1" height="1" fill="#33eeee"/>
<rect x="745" y="189" width="1" height="1" fill="#33eeee"/>
<rect x="747" y="126" width="1" height="1" fill="#33eeee"/>
<rect x="747" y="189" width="1" height="1" fill="#33eeee"/>
<rect x="749" y="126" width="1" height="1" fill="#33eeee"/>
<rect x="749" y="189" width="1" height="1" fill="#33eeee"/>
<rect x="751" y="126" width="1" height="1" fill="#33eeee"/>
<rect x="751" y="189" width="1" height="1" fill="#33eeee"/>
<rect x="753" y="126" width="1" height="1" fill="#33eeee"/>
<rect x="753" y="189" width="1" height="1" fill="#33eeee"/>
<rect x="755" y="126" width="1" height="1" fill="#33eeee"/>
<rect x="755" y="189" width="1" height="1" fill="#33eeee"/>
<rect x="757" y="126" width="1" height="1" fill="#33eeee"/>
<rect x="757" y="189" width="1" height="1" fill="#33eeee"/>
<rect x="759" y="126" width="1" height="1" fill="#33eeee"/>
<rect x="759" y="189" width="1" height="1" fill="#33eeee"/>
<rect x="761" y="126" width="1" height="1" fill="#33eeee"/>
<rect x="761" y="189" width="1" height="1" fill="#33eeee"/>
<rect x="763" y="126" width="1" height="1" fill="#33eeee"/>
<rect x="763" y="189" width="1" height="1" fill="#33eeee"/>
<rect x="765" y="126" width="1" height="1" fill="#33eeee"/>
<rect x="765" y="189" width="1" height="1" fill="#33eeee"/>
<rect x="767" y="126" width="1" height="1" fill="#33eeee"/>
<rect x="767" y="189" width="1" height="1" fill="#33eeee"/>
<rect x="769" y="126" width="1" height="1" fill="#33eeee"/>
<rect x="769" y="189" width="1" height="1" fill="#33eeee"/>
<rect x="771" y="126" width="1" height="1" fill="#33eeee"/>
<rect x="771" y="189" width="1" height="1" fill="#33eeee"/>
<rect x="773" y="126" width="1" height="1" fill="#33eeee"/>
<rect x="773" y="189" width="1" height="1" fill="#33eeee"/>
<rect x="775" y="126" width="1" height="1" fill="#33eeee"/>
<rect x="775" y="189" width="1" height="1" fill="#33eeee"/>
<rect x="777" y="126" width="1" height="1" fill="#33eeee"/>
<rect x="777" y="189" width="1" height="1" fill="#33eeee"/>
<rect x="716" y="127" width="1" height="1" fill="#33eeee"/>
<rect x="779" y="127" width="1" height="1" fill="#33eeee"/>
<rect x="716" y="129" width="1" height="1" fill="#33eeee"/>
<rect x="779" y="129" width="1" height="1" fill="#33eeee"/>
<rect x="716" y="131" width="1" height="1" fill="#33eeee"/>
<rect x="779" y="131" width="1" height="1" fill="#33eeee"/>
<rect x="716" y="133" width="1" height="1" fill="#33eeee"/>
<rect x="779" y="133" width="1" height="1" fill="#33eeee"/>
<rect x="716" y="135" width="1" height="1" fill="#33eeee"/>
<rect x="779" y="135" width="1" height="1" fill="#33eeee"/>
<rect x="716" y="137" width="1" height="1" fill="#33eeee"/>
<rect x="779" y="137" width="1" height="1" fill="#33eeee"/>
<rect x="716" y="139" width="1" height="1" fill="#33eeee"/>
<rect x="779" y="139" width="1" height="1" fill="#33eeee"/>
<rect x="716" y="141" width="1" height="1" fill="#33eeee"/>
<rect x="779" y="141" width="1" height="1" fill="#33eeee"/>
<rect x="716" y="143" width="1" height="1" fill="#33eeee"/>
<rect x="779" y="143" width="1" height="1" fill="#33eeee"/>
<rect x="716" y="145" width="1" height="1" fill="#33eeee"/>
<rect x="779" y="145" width="1" height="1" fill="#33eeee"/>
<rect x="716" y="147" width="1" height="1" fill="#33eeee"/>
<rect x="779" y="147" width="1" height="1" fill="#33eeee"/>
<rect x="716" y="149" width="1" height="1" fill="#33eeee"/>
<rect x="779" y="149" width="1" height="1" fill="#33eeee"/>
<rect x="716" y="151" width="1" height="1" fill="#33eeee"/>
<rect x="779" y="151" width="1" height="1" fill="#33eeee"/>
<rect x="716" y="153" width="1" height="1" fill="#33eeee"/>
<rect x="779" y="153" width="1" height="1" fill="#33eeee"/>
<rect x="716" y="155" width="1" height="1" fill="#33eeee"/>
<rect x="779" y="155" width="1" height="1" fill="#33eeee"/>
<rect x="716" y="157" width="1" height="1" fill="#33eeee"/>
<rect x="779" y="157" width="1" height="1" fill="#33eeee"/>
<rect x="716" y="159" width="1" height="1" fill="#33eeee"/>
<rect x="779" y="159" width="1" height="1" fill="#33eeee"/>
<rect x="716" y="161" width="1" height="1" fill="#33eeee"/>
<rect x="779" y="161" width="1" height="1" fill="#33eeee"/>
<rect x="716" y="163" width="1" height="1" fill="#33eeee"/>
<rect x="779" y="163" width="1" height="1" fill="#33eeee"/>
<rect x="716" y="165" width="1" height="1" fill="#33eeee"/>
<rect x="779" y="165" width="1" height="1" fill="#33eeee"/>
<rect x="716" y="167" width="1" height="1" fill="#33eeee"/>
<rect x="779" y="167" width="1" height="1" fill="#33eeee"/>
<rect x="716" y="169" width="1" height="1" fill="#33eeee"/>
<rect x="779" y="169" width="1" height="1" fill="#33eeee"/>
<rect x="716" y="171" width="1" height="1" fill="#33eeee"/>
<rect x="779" y="171" width="1" height="1" fill="#33eeee"/>
<rect x="716" y="173" width="1" height="1" fill="#33eeee"/>
<rect x="779" y="173" width="1" height="1" fill="#33eeee"/>
<rect x="716" y="175" width="1" height="1" fill="#33eeee"/>
<rect x="779" y="175" width="1" height="1" fill="#33eeee"/>
<rect x="716" y="177" width="1" height="1" fill="#33eeee"/>
<rect x="779" y="177" width="1" height="1" fill="#33eeee"/>
<rect x="716" y="179" width="1" height="1" fill="#33eeee"/>
<rect x="779" y="179" width="1" height="1" fill="#33eeee"/>
<rect x="716" y="181" width="1" height="1" fill="#33eeee"/>
<rect x="779" y="181" width="1" height="1" fill="#33eeee"/>
<rect x="716" y="183" width="1" height="1" fill="#33eeee"/>
<rect x="779" y="183" width="1" height="1" fill="#33eeee"/>
<rect x="716" y="185" width="1" height="1" fill="#33eeee"/>
<rect x="779" y="185" width="1" height="1" fill="#33eeee"/>
<rect x="716" y="187" width="1" height="1" fill="#33eeee"/>
<rect x="779" y="187" width="1" height="1" fill="#33eeee"/>
<text x="748.00" y="163.30" font-size="12" font-weight="bold" stroke="#000" stroke-width="0.3" fill="#000" text-anchor="middle" textLength="47.24" lengthAdjust="spacingAndGlyphs">Record</text>
<rect x="713.5" y="203.5" width="69" height="69" rx="2.5" ry="2.5" fill="url(#gGreen)" stroke="#8a7f8a" stroke-width="1"/>
<text x="749.00" y="244.30" font-size="12" font-weight="bold" stroke="#ffffff" stroke-width="0" fill="#ffffff" text-anchor="middle" textLength="34.13" lengthAdjust="spacingAndGlyphs" opacity="0.45">Start</text>
<text x="748.00" y="243.30" font-size="12" font-weight="bold" stroke="#8c8c8c" stroke-width="0.3" fill="#8c8c8c" text-anchor="middle" textLength="34.13" lengthAdjust="spacingAndGlyphs">Start</text>
<rect x="713.5" y="283.5" width="69" height="69" rx="2.5" ry="2.5" fill="url(#gRed)" stroke="#4a4f4f" stroke-width="1"/>
<text x="748.00" y="323.30" font-size="12" font-weight="bold" stroke="#000" stroke-width="0.3" fill="#000" text-anchor="middle" textLength="37.78" lengthAdjust="spacingAndGlyphs">Abort</text>
<rect x="713.5" y="388.5" width="69" height="69" rx="2.5" ry="2.5" fill="url(#gBtn)" stroke="#8b8b8b" stroke-width="1"/>
<path d="M714.5,455 L714.5,390.5 Q714.5,389.5 715.5,389.5 L780,389.5" fill="none" stroke="#f4f4f6" stroke-width="1"/>
<text x="749.00" y="429.30" font-size="12" font-weight="bold" stroke="#ffffff" stroke-width="0" fill="#ffffff" text-anchor="middle" textLength="53.99" lengthAdjust="spacingAndGlyphs" opacity="0.45">Hit Post</text>
<text x="748.00" y="428.30" font-size="12" font-weight="bold" stroke="#8c8c8c" stroke-width="0.3" fill="#8c8c8c" text-anchor="middle" textLength="53.99" lengthAdjust="spacingAndGlyphs">Hit Post</text>
<rect x="713.5" y="560.5" width="69" height="69" rx="2.5" ry="2.5" fill="url(#gBtn)" stroke="#8b8b8b" stroke-width="1"/>
<path d="M714.5,627 L714.5,562.5 Q714.5,561.5 715.5,561.5 L780,561.5" fill="none" stroke="#f4f4f6" stroke-width="1"/>
<text x="749.00" y="601.30" font-size="12" font-weight="bold" stroke="#ffffff" stroke-width="0" fill="#ffffff" text-anchor="middle" textLength="54.46" lengthAdjust="spacingAndGlyphs" opacity="0.45">Do Over</text>
<text x="748.00" y="600.30" font-size="12" font-weight="bold" stroke="#8c8c8c" stroke-width="0.3" fill="#8c8c8c" text-anchor="middle" textLength="54.46" lengthAdjust="spacingAndGlyphs">Do Over</text>
<rect x="713.5" y="669.5" width="79" height="49" rx="2.5" ry="2.5" fill="url(#gBtn)" stroke="#8b8b8b" stroke-width="1"/>
<path d="M714.5,716 L714.5,671.5 Q714.5,670.5 715.5,670.5 L790,670.5" fill="none" stroke="#f4f4f6" stroke-width="1"/>
<text x="753.00" y="699.30" font-size="12" font-weight="bold" stroke="#000" stroke-width="0.3" fill="#000" text-anchor="middle" textLength="36.45" lengthAdjust="spacingAndGlyphs">Close</text>
<rect x="22.5" y="669.5" width="79" height="49" rx="2.5" ry="2.5" fill="url(#gBtn)" stroke="#8b8b8b" stroke-width="1"/>
<path d="M23.5,716 L23.5,671.5 Q23.5,670.5 24.5,670.5 L99,670.5" fill="none" stroke="#f4f4f6" stroke-width="1"/>
<text x="63.00" y="693.30" font-size="12" font-weight="bold" stroke="#ffffff" stroke-width="0" fill="#ffffff" text-anchor="middle" textLength="39.94" lengthAdjust="spacingAndGlyphs" opacity="0.45">Insert</text>
<text x="62.00" y="692.30" font-size="12" font-weight="bold" stroke="#8c8c8c" stroke-width="0.3" fill="#8c8c8c" text-anchor="middle" textLength="39.94" lengthAdjust="spacingAndGlyphs">Insert</text>
<text x="63.00" y="707.30" font-size="12" font-weight="bold" stroke="#ffffff" stroke-width="0" fill="#ffffff" text-anchor="middle" textLength="37.29" lengthAdjust="spacingAndGlyphs" opacity="0.45">Track</text>
<text x="62.00" y="706.30" font-size="12" font-weight="bold" stroke="#8c8c8c" stroke-width="0.3" fill="#8c8c8c" text-anchor="middle" textLength="37.29" lengthAdjust="spacingAndGlyphs">Track</text>
<rect x="114.5" y="669.5" width="79" height="49" rx="2.5" ry="2.5" fill="url(#gBtn)" stroke="#8b8b8b" stroke-width="1"/>
<path d="M115.5,716 L115.5,671.5 Q115.5,670.5 116.5,670.5 L191,670.5" fill="none" stroke="#f4f4f6" stroke-width="1"/>
<text x="155.00" y="693.30" font-size="12" font-weight="bold" stroke="#ffffff" stroke-width="0" fill="#ffffff" text-anchor="middle" textLength="44.23" lengthAdjust="spacingAndGlyphs" opacity="0.45">Delete</text>
<text x="154.00" y="692.30" font-size="12" font-weight="bold" stroke="#8c8c8c" stroke-width="0.3" fill="#8c8c8c" text-anchor="middle" textLength="44.23" lengthAdjust="spacingAndGlyphs">Delete</text>
<text x="155.00" y="707.30" font-size="12" font-weight="bold" stroke="#ffffff" stroke-width="0" fill="#ffffff" text-anchor="middle" textLength="37.29" lengthAdjust="spacingAndGlyphs" opacity="0.45">Track</text>
<text x="154.00" y="706.30" font-size="12" font-weight="bold" stroke="#8c8c8c" stroke-width="0.3" fill="#8c8c8c" text-anchor="middle" textLength="37.29" lengthAdjust="spacingAndGlyphs">Track</text>
<rect x="514.5" y="669.5" width="79" height="49" rx="2.5" ry="2.5" fill="url(#gBtn)" stroke="#8b8b8b" stroke-width="1"/>
<path d="M515.5,716 L515.5,671.5 Q515.5,670.5 516.5,670.5 L591,670.5" fill="none" stroke="#f4f4f6" stroke-width="1"/>
<text x="555.00" y="693.30" font-size="12" font-weight="bold" stroke="#ffffff" stroke-width="0" fill="#ffffff" text-anchor="middle" textLength="58.72" lengthAdjust="spacingAndGlyphs" opacity="0.45">Previous</text>
<text x="554.00" y="692.30" font-size="12" font-weight="bold" stroke="#8c8c8c" stroke-width="0.3" fill="#8c8c8c" text-anchor="middle" textLength="58.72" lengthAdjust="spacingAndGlyphs">Previous</text>
<text x="555.00" y="707.30" font-size="12" font-weight="bold" stroke="#ffffff" stroke-width="0" fill="#ffffff" text-anchor="middle" textLength="37.29" lengthAdjust="spacingAndGlyphs" opacity="0.45">Track</text>
<text x="554.00" y="706.30" font-size="12" font-weight="bold" stroke="#8c8c8c" stroke-width="0.3" fill="#8c8c8c" text-anchor="middle" textLength="37.29" lengthAdjust="spacingAndGlyphs">Track</text>
<rect x="604.5" y="669.5" width="79" height="49" rx="2.5" ry="2.5" fill="url(#gBtn)" stroke="#8b8b8b" stroke-width="1"/>
<path d="M605.5,716 L605.5,671.5 Q605.5,670.5 606.5,670.5 L681,670.5" fill="none" stroke="#f4f4f6" stroke-width="1"/>
<text x="645.00" y="693.30" font-size="12" font-weight="bold" stroke="#ffffff" stroke-width="0" fill="#ffffff" text-anchor="middle" textLength="31.66" lengthAdjust="spacingAndGlyphs" opacity="0.45">Next</text>
<text x="644.00" y="692.30" font-size="12" font-weight="bold" stroke="#8c8c8c" stroke-width="0.3" fill="#8c8c8c" text-anchor="middle" textLength="31.66" lengthAdjust="spacingAndGlyphs">Next</text>
<text x="645.00" y="707.30" font-size="12" font-weight="bold" stroke="#ffffff" stroke-width="0" fill="#ffffff" text-anchor="middle" textLength="37.29" lengthAdjust="spacingAndGlyphs" opacity="0.45">Track</text>
<text x="644.00" y="706.30" font-size="12" font-weight="bold" stroke="#8c8c8c" stroke-width="0.3" fill="#8c8c8c" text-anchor="middle" textLength="37.29" lengthAdjust="spacingAndGlyphs">Track</text>
<rect x="13.5" y="364.5" width="691" height="293" rx="2.5" ry="2.5" fill="#efefef" stroke="#8e8e8e" stroke-width="1"/>
<rect x="14.5" y="365.5" width="689" height="291" rx="1.5" ry="1.5" fill="none" stroke="#bdbdbd" stroke-width="1"/>
<rect x="15" y="387" width="672" height="254" fill="#ffffff"/>
<g clip-path="url(#clipTbl)">
<rect x="15" y="365" width="672" height="22" fill="url(#gHdr)"/>
<rect x="15" y="365" width="672" height="1" fill="#8c8c8c"/>
<rect x="15" y="386" width="672" height="1" fill="#8c8c8c"/>
<rect x="15" y="365" width="1" height="22" fill="#8c8c8c"/>
<rect x="128" y="365" width="1" height="22" fill="#8c8c8c"/>
<rect x="16" y="366" width="112" height="1" fill="#f2f2f4"/>
<rect x="16" y="366" width="1" height="20" fill="#f2f2f4"/>
<text x="73.00" y="381.00" font-size="11" font-weight="bold" stroke="#ffffff" stroke-width="0" fill="#ffffff" text-anchor="middle" textLength="65.31" lengthAdjust="spacingAndGlyphs" opacity="0.6">Start Time</text>
<text x="72.00" y="380.00" font-size="11" font-weight="bold" stroke="#808080" stroke-width="0.3" fill="#808080" text-anchor="middle" textLength="65.31" lengthAdjust="spacingAndGlyphs">Start Time</text>
<rect x="129" y="365" width="1" height="22" fill="#8c8c8c"/>
<rect x="179" y="365" width="1" height="22" fill="#8c8c8c"/>
<rect x="130" y="366" width="49" height="1" fill="#f2f2f4"/>
<rect x="130" y="366" width="1" height="20" fill="#f2f2f4"/>
<text x="155.50" y="381.00" font-size="11" font-weight="bold" stroke="#ffffff" stroke-width="0" fill="#ffffff" text-anchor="middle" textLength="34.73" lengthAdjust="spacingAndGlyphs" opacity="0.6">Trans</text>
<text x="154.50" y="380.00" font-size="11" font-weight="bold" stroke="#808080" stroke-width="0.3" fill="#808080" text-anchor="middle" textLength="34.73" lengthAdjust="spacingAndGlyphs">Trans</text>
<rect x="180" y="365" width="1" height="22" fill="#8c8c8c"/>
<rect x="235" y="365" width="1" height="22" fill="#8c8c8c"/>
<rect x="181" y="366" width="54" height="1" fill="#f2f2f4"/>
<rect x="181" y="366" width="1" height="20" fill="#f2f2f4"/>
<text x="209.00" y="381.00" font-size="11" font-weight="bold" stroke="#ffffff" stroke-width="0" fill="#ffffff" text-anchor="middle" textLength="26.18" lengthAdjust="spacingAndGlyphs" opacity="0.6">Cart</text>
<text x="208.00" y="380.00" font-size="11" font-weight="bold" stroke="#808080" stroke-width="0.3" fill="#808080" text-anchor="middle" textLength="26.18" lengthAdjust="spacingAndGlyphs">Cart</text>
<rect x="236" y="365" width="1" height="22" fill="#8c8c8c"/>
<rect x="316" y="365" width="1" height="22" fill="#8c8c8c"/>
<rect x="237" y="366" width="79" height="1" fill="#f2f2f4"/>
<rect x="237" y="366" width="1" height="20" fill="#f2f2f4"/>
<text x="277.50" y="381.00" font-size="11" font-weight="bold" stroke="#ffffff" stroke-width="0" fill="#ffffff" text-anchor="middle" textLength="37.72" lengthAdjust="spacingAndGlyphs" opacity="0.6">Group</text>
<text x="276.50" y="380.00" font-size="11" font-weight="bold" stroke="#808080" stroke-width="0.3" fill="#808080" text-anchor="middle" textLength="37.72" lengthAdjust="spacingAndGlyphs">Group</text>
<rect x="317" y="365" width="1" height="22" fill="#8c8c8c"/>
<rect x="373" y="365" width="1" height="22" fill="#8c8c8c"/>
<rect x="318" y="366" width="55" height="1" fill="#f2f2f4"/>
<rect x="318" y="366" width="1" height="20" fill="#f2f2f4"/>
<text x="346.50" y="381.00" font-size="11" font-weight="bold" stroke="#ffffff" stroke-width="0" fill="#ffffff" text-anchor="middle" textLength="43.26" lengthAdjust="spacingAndGlyphs" opacity="0.6">Length</text>
<text x="345.50" y="380.00" font-size="11" font-weight="bold" stroke="#808080" stroke-width="0.3" fill="#808080" text-anchor="middle" textLength="43.26" lengthAdjust="spacingAndGlyphs">Length</text>
<rect x="374" y="365" width="1" height="22" fill="#8c8c8c"/>
<rect x="621" y="365" width="1" height="22" fill="#8c8c8c"/>
<rect x="375" y="366" width="246" height="1" fill="#f2f2f4"/>
<rect x="375" y="366" width="1" height="20" fill="#f2f2f4"/>
<text x="499.00" y="381.00" font-size="11" font-weight="bold" stroke="#ffffff" stroke-width="0" fill="#ffffff" text-anchor="middle" textLength="27.76" lengthAdjust="spacingAndGlyphs" opacity="0.6">Title</text>
<text x="498.00" y="380.00" font-size="11" font-weight="bold" stroke="#808080" stroke-width="0.3" fill="#808080" text-anchor="middle" textLength="27.76" lengthAdjust="spacingAndGlyphs">Title</text>
<rect x="622" y="365" width="1" height="22" fill="#8c8c8c"/>
<rect x="699" y="365" width="1" height="22" fill="#8c8c8c"/>
<rect x="623" y="366" width="76" height="1" fill="#f2f2f4"/>
<rect x="623" y="366" width="1" height="20" fill="#f2f2f4"/>
</g>
<g clip-path="url(#clipBody)">
<rect x="18.5" y="394.5" width="15" height="15" fill="#dadada" stroke="#555" stroke-width="1"/>
<path d="M19.5,407 L19.5,395.5 L32,395.5" fill="none" stroke="#fafafa" stroke-width="1"/>
<rect x="19" y="406.5" width="14" height="0.8" fill="#f0f0f0"/>
<rect x="19" y="407.3" width="14" height="1.7" fill="#cfcfcf"/>
<path d="M26,402 L32.5,395.5" stroke="#555" stroke-width="3.2"/>
<path d="M26.3,401.7 L32.5,395.5" stroke="#e6e6e6" stroke-width="1.3"/>
<circle cx="25.7" cy="402.3" r="1.1" fill="#333"/>
<text x="125.50" y="406.30" font-size="11" fill="#0000ff" text-anchor="end" textLength="66.62" lengthAdjust="spacingAndGlyphs">T13:15:00.0</text>
<text x="135.51" y="406.30" font-size="11" fill="#000000" text-anchor="start" textLength="37.46" lengthAdjust="spacingAndGlyphs">SEGUE</text>
<text x="208.00" y="406.30" font-size="11" fill="#000000" text-anchor="middle" textLength="46.47" lengthAdjust="spacingAndGlyphs">MARKER</text>
<text x="376.65" y="406.30" font-size="11" fill="#000000" text-anchor="start" textLength="135.63" lengthAdjust="spacingAndGlyphs">Station Break Goes Here</text>
<path d="M18.5,429.5 L20,429.5 L25.5,424.5 L27,425.5 L27,438.5 L25.5,439.5 L20,434.5 L18.5,434.5 Z" fill="#fbfbfb"/>
<path d="M26.5,425.2 L25.5,424.5 L20,429.5 L18.5,429.5 L18.5,434.5 L20,434.5 L25.5,439.5 L26.5,438.8" fill="none" stroke="#4a4a4a" stroke-width="0.9" stroke-linejoin="round"/>
<path d="M24.5,428 L24.5,436" stroke="#444" stroke-width="1"/>
<ellipse cx="25.5" cy="432" rx="0.9" ry="1.5" fill="none" stroke="#444" stroke-width="0.9"/>
<path d="M28.5,427 L28.5,438" stroke="#b4b4b4" stroke-width="0.9"/>
<path d="M30.5,429.5 L32.7,427.3 M30.2,432.5 L34,432.5 M30.5,435.5 L32.7,437.7" stroke="#999" stroke-width="0.9"/>
<text x="125.50" y="436.30" font-size="11" fill="#000000" text-anchor="end" textLength="59.90" lengthAdjust="spacingAndGlyphs">13:15:00.0</text>
<text x="135.51" y="436.30" font-size="11" fill="#000000" text-anchor="start" textLength="37.46" lengthAdjust="spacingAndGlyphs">SEGUE</text>
<text x="208.00" y="436.30" font-size="11" fill="#000000" text-anchor="middle" textLength="41.99" lengthAdjust="spacingAndGlyphs">060101</text>
<text x="276.50" y="436.30" font-size="11" font-weight="bold" stroke="#50ee00" stroke-width="0.3" fill="#50ee00" text-anchor="middle" textLength="45.37" lengthAdjust="spacingAndGlyphs">IDENTS</text>
<text x="371.00" y="436.30" font-size="11" fill="#000000" text-anchor="end" textLength="17.70" lengthAdjust="spacingAndGlyphs">:05</text>
<text x="376.63" y="436.30" font-size="11" fill="#000000" text-anchor="start" textLength="81.58" lengthAdjust="spacingAndGlyphs">Station Imager</text>
<path d="M18.5,459.5 L20,459.5 L25.5,454.5 L27,455.5 L27,468.5 L25.5,469.5 L20,464.5 L18.5,464.5 Z" fill="#fbfbfb"/>
<path d="M26.5,455.2 L25.5,454.5 L20,459.5 L18.5,459.5 L18.5,464.5 L20,464.5 L25.5,469.5 L26.5,468.8" fill="none" stroke="#4a4a4a" stroke-width="0.9" stroke-linejoin="round"/>
<path d="M24.5,458 L24.5,466" stroke="#444" stroke-width="1"/>
<ellipse cx="25.5" cy="462" rx="0.9" ry="1.5" fill="none" stroke="#444" stroke-width="0.9"/>
<path d="M28.5,457 L28.5,468" stroke="#b4b4b4" stroke-width="0.9"/>
<path d="M30.5,459.5 L32.7,457.3 M30.2,462.5 L34,462.5 M30.5,465.5 L32.7,467.7" stroke="#999" stroke-width="0.9"/>
<text x="125.50" y="466.30" font-size="11" fill="#000000" text-anchor="end" textLength="59.90" lengthAdjust="spacingAndGlyphs">13:15:03.0</text>
<text x="135.51" y="466.30" font-size="11" fill="#000000" text-anchor="start" textLength="37.46" lengthAdjust="spacingAndGlyphs">SEGUE</text>
<text x="208.00" y="466.30" font-size="11" fill="#000000" text-anchor="middle" textLength="41.99" lengthAdjust="spacingAndGlyphs">010559</text>
<text x="276.50" y="466.30" font-size="11" font-weight="bold" stroke="#08a8ff" stroke-width="0.3" fill="#08a8ff" text-anchor="middle" textLength="39.97" lengthAdjust="spacingAndGlyphs">MUSIC</text>
<text x="371.00" y="466.30" font-size="11" fill="#000000" text-anchor="end" textLength="24.70" lengthAdjust="spacingAndGlyphs">4:06</text>
<text x="376.18" y="466.30" font-size="11" fill="#000000" text-anchor="start" textLength="109.60" lengthAdjust="spacingAndGlyphs">Love Is A Battlefield</text>
<text x="624.99" y="466.30" font-size="11" fill="#000000" text-anchor="start" textLength="64.79" lengthAdjust="spacingAndGlyphs">Pat Benatar</text>
<path d="M18.5,489.5 L20,489.5 L25.5,484.5 L27,485.5 L27,498.5 L25.5,499.5 L20,494.5 L18.5,494.5 Z" fill="#fbfbfb"/>
<path d="M26.5,485.2 L25.5,484.5 L20,489.5 L18.5,489.5 L18.5,494.5 L20,494.5 L25.5,499.5 L26.5,498.8" fill="none" stroke="#4a4a4a" stroke-width="0.9" stroke-linejoin="round"/>
<path d="M24.5,488 L24.5,496" stroke="#444" stroke-width="1"/>
<ellipse cx="25.5" cy="492" rx="0.9" ry="1.5" fill="none" stroke="#444" stroke-width="0.9"/>
<path d="M28.5,487 L28.5,498" stroke="#b4b4b4" stroke-width="0.9"/>
<path d="M30.5,489.5 L32.7,487.3 M30.2,492.5 L34,492.5 M30.5,495.5 L32.7,497.7" stroke="#999" stroke-width="0.9"/>
<text x="125.50" y="496.30" font-size="11" fill="#000000" text-anchor="end" textLength="59.90" lengthAdjust="spacingAndGlyphs">13:16:03.0</text>
<text x="135.51" y="496.30" font-size="11" fill="#000000" text-anchor="start" textLength="37.46" lengthAdjust="spacingAndGlyphs">SEGUE</text>
<text x="208.00" y="496.30" font-size="11" fill="#000000" text-anchor="middle" textLength="41.99" lengthAdjust="spacingAndGlyphs">010708</text>
<text x="276.50" y="496.30" font-size="11" font-weight="bold" stroke="#08a8ff" stroke-width="0.3" fill="#08a8ff" text-anchor="middle" textLength="39.97" lengthAdjust="spacingAndGlyphs">MUSIC</text>
<text x="371.00" y="496.30" font-size="11" fill="#000000" text-anchor="end" textLength="24.70" lengthAdjust="spacingAndGlyphs">2:49</text>
<text x="376.64" y="496.30" font-size="11" fill="#000000" text-anchor="start" textLength="146.77" lengthAdjust="spacingAndGlyphs">Stop! In The Name of Love</text>
<text x="625.44" y="496.30" font-size="11" fill="#000000" text-anchor="start" textLength="66.16" lengthAdjust="spacingAndGlyphs">Suprmemes</text>
<rect x="15" y="507" width="672" height="30" fill="#567391"/>
<rect x="23.5" y="514" width="5.5" height="11" rx="2.5" fill="url(#gMic)"/>
<path d="M22.8,523.5 Q26.2,527 29.6,523.5" fill="none" stroke="#ccc" stroke-width="1"/>
<rect x="24" y="526" width="4.5" height="4" fill="url(#gMic)"/>
<text x="125.50" y="526.30" font-size="11" fill="#ffffff" text-anchor="end" textLength="59.90" lengthAdjust="spacingAndGlyphs">00:00:00.0</text>
<text x="135.51" y="526.30" font-size="11" fill="#ffffff" text-anchor="start" textLength="37.46" lengthAdjust="spacingAndGlyphs">SEGUE</text>
<text x="208.00" y="526.30" font-size="11" fill="#ffffff" text-anchor="middle" textLength="36.78" lengthAdjust="spacingAndGlyphs">TRACK</text>
<text x="276.50" y="526.30" font-size="11" font-weight="bold" stroke="#ffffff" stroke-width="0.3" fill="#ffffff" text-anchor="middle" textLength="49.01" lengthAdjust="spacingAndGlyphs">TRACKS</text>
<text x="377.15" y="526.30" font-size="11" fill="#ffffff" text-anchor="start" textLength="64.02" lengthAdjust="spacingAndGlyphs">Voice Track</text>
<path d="M18.5,549.5 L20,549.5 L25.5,544.5 L27,545.5 L27,558.5 L25.5,559.5 L20,554.5 L18.5,554.5 Z" fill="#fbfbfb"/>
<path d="M26.5,545.2 L25.5,544.5 L20,549.5 L18.5,549.5 L18.5,554.5 L20,554.5 L25.5,559.5 L26.5,558.8" fill="none" stroke="#4a4a4a" stroke-width="0.9" stroke-linejoin="round"/>
<path d="M24.5,548 L24.5,556" stroke="#444" stroke-width="1"/>
<ellipse cx="25.5" cy="552" rx="0.9" ry="1.5" fill="none" stroke="#444" stroke-width="0.9"/>
<path d="M28.5,547 L28.5,558" stroke="#b4b4b4" stroke-width="0.9"/>
<path d="M30.5,549.5 L32.7,547.3 M30.2,552.5 L34,552.5 M30.5,555.5 L32.7,557.7" stroke="#999" stroke-width="0.9"/>
<text x="125.50" y="556.30" font-size="11" fill="#000000" text-anchor="end" textLength="59.90" lengthAdjust="spacingAndGlyphs">13:17:04.0</text>
<text x="135.51" y="556.30" font-size="11" fill="#000000" text-anchor="start" textLength="37.46" lengthAdjust="spacingAndGlyphs">SEGUE</text>
<text x="208.00" y="556.30" font-size="11" fill="#000000" text-anchor="middle" textLength="41.99" lengthAdjust="spacingAndGlyphs">010175</text>
<text x="276.50" y="556.30" font-size="11" font-weight="bold" stroke="#08a8ff" stroke-width="0.3" fill="#08a8ff" text-anchor="middle" textLength="39.97" lengthAdjust="spacingAndGlyphs">MUSIC</text>
<text x="371.00" y="556.30" font-size="11" fill="#000000" text-anchor="end" textLength="24.70" lengthAdjust="spacingAndGlyphs">3:17</text>
<text x="376.63" y="556.30" font-size="11" fill="#000000" text-anchor="start" textLength="132.81" lengthAdjust="spacingAndGlyphs">One Toke Over The Line</text>
<text x="624.98" y="556.30" font-size="11" fill="#000000" text-anchor="start" textLength="95.02" lengthAdjust="spacingAndGlyphs">Brewer &amp; Shipley</text>
<path d="M18.5,579.5 L20,579.5 L25.5,574.5 L27,575.5 L27,588.5 L25.5,589.5 L20,584.5 L18.5,584.5 Z" fill="#fbfbfb"/>
<path d="M26.5,575.2 L25.5,574.5 L20,579.5 L18.5,579.5 L18.5,584.5 L20,584.5 L25.5,589.5 L26.5,588.8" fill="none" stroke="#4a4a4a" stroke-width="0.9" stroke-linejoin="round"/>
<path d="M24.5,578 L24.5,586" stroke="#444" stroke-width="1"/>
<ellipse cx="25.5" cy="582" rx="0.9" ry="1.5" fill="none" stroke="#444" stroke-width="0.9"/>
<path d="M28.5,577 L28.5,588" stroke="#b4b4b4" stroke-width="0.9"/>
<path d="M30.5,579.5 L32.7,577.3 M30.2,582.5 L34,582.5 M30.5,585.5 L32.7,587.7" stroke="#999" stroke-width="0.9"/>
<text x="125.50" y="586.30" font-size="11" fill="#000000" text-anchor="end" textLength="59.90" lengthAdjust="spacingAndGlyphs">13:18:03.0</text>
<text x="135.51" y="586.30" font-size="11" fill="#000000" text-anchor="start" textLength="37.46" lengthAdjust="spacingAndGlyphs">SEGUE</text>
<text x="208.00" y="586.30" font-size="11" fill="#000000" text-anchor="middle" textLength="41.99" lengthAdjust="spacingAndGlyphs">010813</text>
<text x="276.50" y="586.30" font-size="11" font-weight="bold" stroke="#08a8ff" stroke-width="0.3" fill="#08a8ff" text-anchor="middle" textLength="39.97" lengthAdjust="spacingAndGlyphs">MUSIC</text>
<text x="371.00" y="586.30" font-size="11" fill="#000000" text-anchor="end" textLength="24.70" lengthAdjust="spacingAndGlyphs">4:34</text>
<text x="376.20" y="586.30" font-size="11" fill="#000000" text-anchor="start" textLength="58.73" lengthAdjust="spacingAndGlyphs">Lucky Man</text>
<text x="625.00" y="586.30" font-size="11" fill="#000000" text-anchor="start" textLength="135.39" lengthAdjust="spacingAndGlyphs">Emerson, Lake &amp; Palmer</text>
<path d="M18.5,609.5 L20,609.5 L25.5,604.5 L27,605.5 L27,618.5 L25.5,619.5 L20,614.5 L18.5,614.5 Z" fill="#fbfbfb"/>
<path d="M26.5,605.2 L25.5,604.5 L20,609.5 L18.5,609.5 L18.5,614.5 L20,614.5 L25.5,619.5 L26.5,618.8" fill="none" stroke="#4a4a4a" stroke-width="0.9" stroke-linejoin="round"/>
<path d="M24.5,608 L24.5,616" stroke="#444" stroke-width="1"/>
<ellipse cx="25.5" cy="612" rx="0.9" ry="1.5" fill="none" stroke="#444" stroke-width="0.9"/>
<path d="M28.5,607 L28.5,618" stroke="#b4b4b4" stroke-width="0.9"/>
<path d="M30.5,609.5 L32.7,607.3 M30.2,612.5 L34,612.5 M30.5,615.5 L32.7,617.7" stroke="#999" stroke-width="0.9"/>
<text x="125.50" y="616.30" font-size="11" fill="#000000" text-anchor="end" textLength="59.90" lengthAdjust="spacingAndGlyphs">13:19:04.0</text>
<text x="135.51" y="616.30" font-size="11" fill="#000000" text-anchor="start" textLength="37.46" lengthAdjust="spacingAndGlyphs">SEGUE</text>
<text x="208.00" y="616.30" font-size="11" fill="#000000" text-anchor="middle" textLength="41.99" lengthAdjust="spacingAndGlyphs">010809</text>
<text x="276.50" y="616.30" font-size="11" font-weight="bold" stroke="#08a8ff" stroke-width="0.3" fill="#08a8ff" text-anchor="middle" textLength="39.97" lengthAdjust="spacingAndGlyphs">MUSIC</text>
<text x="371.00" y="616.30" font-size="11" fill="#000000" text-anchor="end" textLength="24.70" lengthAdjust="spacingAndGlyphs">3:49</text>
<text x="376.06" y="616.30" font-size="11" fill="#000000" text-anchor="start" textLength="78.32" lengthAdjust="spacingAndGlyphs">I'm So Excited</text>
<text x="625.00" y="616.30" font-size="11" fill="#000000" text-anchor="start" textLength="79.59" lengthAdjust="spacingAndGlyphs">Pointer Sisters</text>
<path d="M18.5,639.5 L20,639.5 L25.5,634.5 L27,635.5 L27,648.5 L25.5,649.5 L20,644.5 L18.5,644.5 Z" fill="#fbfbfb"/>
<path d="M26.5,635.2 L25.5,634.5 L20,639.5 L18.5,639.5 L18.5,644.5 L20,644.5 L25.5,649.5 L26.5,648.8" fill="none" stroke="#4a4a4a" stroke-width="0.9" stroke-linejoin="round"/>
<path d="M24.5,638 L24.5,646" stroke="#444" stroke-width="1"/>
<ellipse cx="25.5" cy="642" rx="0.9" ry="1.5" fill="none" stroke="#444" stroke-width="0.9"/>
<path d="M28.5,637 L28.5,648" stroke="#b4b4b4" stroke-width="0.9"/>
<path d="M30.5,639.5 L32.7,637.3 M30.2,642.5 L34,642.5 M30.5,645.5 L32.7,647.7" stroke="#999" stroke-width="0.9"/>
<text x="125.50" y="646.30" font-size="11" fill="#000000" text-anchor="end" textLength="59.90" lengthAdjust="spacingAndGlyphs">13:20:04.0</text>
<text x="135.51" y="646.30" font-size="11" fill="#000000" text-anchor="start" textLength="37.46" lengthAdjust="spacingAndGlyphs">SEGUE</text>
<text x="208.00" y="646.30" font-size="11" fill="#000000" text-anchor="middle" textLength="41.99" lengthAdjust="spacingAndGlyphs">010705</text>
<text x="276.50" y="646.30" font-size="11" font-weight="bold" stroke="#08a8ff" stroke-width="0.3" fill="#08a8ff" text-anchor="middle" textLength="39.97" lengthAdjust="spacingAndGlyphs">MUSIC</text>
<text x="371.00" y="646.30" font-size="11" fill="#000000" text-anchor="end" textLength="24.70" lengthAdjust="spacingAndGlyphs">2:36</text>
<text x="376.44" y="646.30" font-size="11" fill="#000000" text-anchor="start" textLength="180.17" lengthAdjust="spacingAndGlyphs">(Sittin' On) The Dock of The Way</text>
<text x="625.42" y="646.30" font-size="11" fill="#000000" text-anchor="start" textLength="70.64" lengthAdjust="spacingAndGlyphs">Otis Redding</text>
</g>
<rect x="687" y="366" width="17" height="275" fill="#efefef"/>
<path d="M687.5,380 L687.5,609 M702.5,380 L702.5,609" stroke="#a8a8a8" stroke-width="1" stroke-dasharray="1,1"/>
<rect x="687.5" y="365.5" width="15" height="15" rx="2" ry="2" fill="url(#gSb)" stroke="#8e8e8e" stroke-width="1"/>
<path d="M691.0,374.0 L699.0,374.0 L695.0,370.0 Z" fill="#777"/>
<rect x="687.5" y="402.5" width="15" height="25" rx="2" ry="2" fill="#f4f4f6" stroke="#7e7e7e" stroke-width="1.2"/>
<rect x="687.5" y="609.5" width="15" height="15" rx="2" ry="2" fill="url(#gSb)" stroke="#8e8e8e" stroke-width="1"/>
<path d="M691.0,618.0 L699.0,618.0 L695.0,614.0 Z" fill="#777"/>
<rect x="687.5" y="625.5" width="15" height="15" rx="2" ry="2" fill="url(#gSb)" stroke="#8e8e8e" stroke-width="1"/>
<path d="M691.0,630.5 L699.0,630.5 L695.0,634.5 Z" fill="#777"/>
<rect x="15" y="641" width="672" height="16" fill="#efefef"/>
<path d="M387,641.5 L655,641.5 M387,655.5 L655,655.5" stroke="#a8a8a8" stroke-width="1" stroke-dasharray="1,1"/>
<rect x="15.5" y="641.5" width="15" height="15" rx="2" ry="2" fill="url(#gSb)" stroke="#8e8e8e" stroke-width="1"/>
<path d="M24.5,645.0 L24.5,653.0 L20.0,649.0 Z" fill="#777"/>
<rect x="31.5" y="641.5" width="355" height="15" rx="2" ry="2" fill="#efefef" stroke="#7e7e7e" stroke-width="1.2"/>
<rect x="33" y="642" width="352" height="1" fill="#fbfbfb"/>
<rect x="201" y="644" width="1" height="1" fill="#8a8a8a"/>
<rect x="202" y="645" width="1" height="1" fill="#ffffff"/>
<rect x="202" y="644" width="1" height="1" fill="#b8b8b8"/>
<rect x="201" y="645" width="1" height="1" fill="#b8b8b8"/>
<rect x="201" y="648" width="1" height="1" fill="#8a8a8a"/>
<rect x="202" y="649" width="1" height="1" fill="#ffffff"/>
<rect x="202" y="648" width="1" height="1" fill="#b8b8b8"/>
<rect x="201" y="649" width="1" height="1" fill="#b8b8b8"/>
<rect x="201" y="652" width="1" height="1" fill="#8a8a8a"/>
<rect x="202" y="653" width="1" height="1" fill="#ffffff"/>
<rect x="202" y="652" width="1" height="1" fill="#b8b8b8"/>
<rect x="201" y="653" width="1" height="1" fill="#b8b8b8"/>
<rect x="205" y="644" width="1" height="1" fill="#8a8a8a"/>
<rect x="206" y="645" width="1" height="1" fill="#ffffff"/>
<rect x="206" y="644" width="1" height="1" fill="#b8b8b8"/>
<rect x="205" y="645" width="1" height="1" fill="#b8b8b8"/>
<rect x="205" y="648" width="1" height="1" fill="#8a8a8a"/>
<rect x="206" y="649" width="1" height="1" fill="#ffffff"/>
<rect x="206" y="648" width="1" height="1" fill="#b8b8b8"/>
<rect x="205" y="649" width="1" height="1" fill="#b8b8b8"/>
<rect x="205" y="652" width="1" height="1" fill="#8a8a8a"/>
<rect x="206" y="653" width="1" height="1" fill="#ffffff"/>
<rect x="206" y="652" width="1" height="1" fill="#b8b8b8"/>
<rect x="205" y="653" width="1" height="1" fill="#b8b8b8"/>
<rect x="209" y="644" width="1" height="1" fill="#8a8a8a"/>
<rect x="210" y="645" width="1" height="1" fill="#ffffff"/>
<rect x="210" y="644" width="1" height="1" fill="#b8b8b8"/>
<rect x="209" y="645" width="1" height="1" fill="#b8b8b8"/>
<rect x="209" y="648" width="1" height="1" fill="#8a8a8a"/>
<rect x="210" y="649" width="1" height="1" fill="#ffffff"/>
<rect x="210" y="648" width="1" height="1" fill="#b8b8b8"/>
<rect x="209" y="649" width="1" height="1" fill="#b8b8b8"/>
<rect x="209" y="652" width="1" height="1" fill="#8a8a8a"/>
<rect x="210" y="653" width="1" height="1" fill="#ffffff"/>
<rect x="210" y="652" width="1" height="1" fill="#b8b8b8"/>
<rect x="209" y="653" width="1" height="1" fill="#b8b8b8"/>
<rect x="213" y="644" width="1" height="1" fill="#8a8a8a"/>
<rect x="214" y="645" width="1" height="1" fill="#ffffff"/>
<rect x="214" y="644" width="1" height="1" fill="#b8b8b8"/>
<rect x="213" y="645" width="1" height="1" fill="#b8b8b8"/>
<rect x="213" y="648" width="1" height="1" fill="#8a8a8a"/>
<rect x="214" y="649" width="1" height="1" fill="#ffffff"/>
<rect x="214" y="648" width="1" height="1" fill="#b8b8b8"/>
<rect x="213" y="649" width="1" height="1" fill="#b8b8b8"/>
<rect x="213" y="652" width="1" height="1" fill="#8a8a8a"/>
<rect x="214" y="653" width="1" height="1" fill="#ffffff"/>
<rect x="214" y="652" width="1" height="1" fill="#b8b8b8"/>
<rect x="213" y="653" width="1" height="1" fill="#b8b8b8"/>
<rect x="217" y="644" width="1" height="1" fill="#8a8a8a"/>
<rect x="218" y="645" width="1" height="1" fill="#ffffff"/>
<rect x="218" y="644" width="1" height="1" fill="#b8b8b8"/>
<rect x="217" y="645" width="1" height="1" fill="#b8b8b8"/>
<rect x="217" y="648" width="1" height="1" fill="#8a8a8a"/>
<rect x="218" y="649" width="1" height="1" fill="#ffffff"/>
<rect x="218" y="648" width="1" height="1" fill="#b8b8b8"/>
<rect x="217" y="649" width="1" height="1" fill="#b8b8b8"/>
<rect x="217" y="652" width="1" height="1" fill="#8a8a8a"/>
<rect x="218" y="653" width="1" height="1" fill="#ffffff"/>
<rect x="218" y="652" width="1" height="1" fill="#b8b8b8"/>
<rect x="217" y="653" width="1" height="1" fill="#b8b8b8"/>
<rect x="655.5" y="641.5" width="15" height="15" rx="2" ry="2" fill="url(#gSb)" stroke="#8e8e8e" stroke-width="1"/>
<path d="M664.5,645.0 L664.5,653.0 L660.0,649.0 Z" fill="#777"/>
<rect x="671.5" y="641.5" width="15" height="15" rx="2" ry="2" fill="url(#gSb)" stroke="#8e8e8e" stroke-width="1"/>
<path d="M676.0,645.0 L676.0,653.0 L681.0,649.0 Z" fill="#777"/>
</svg></body></html>
